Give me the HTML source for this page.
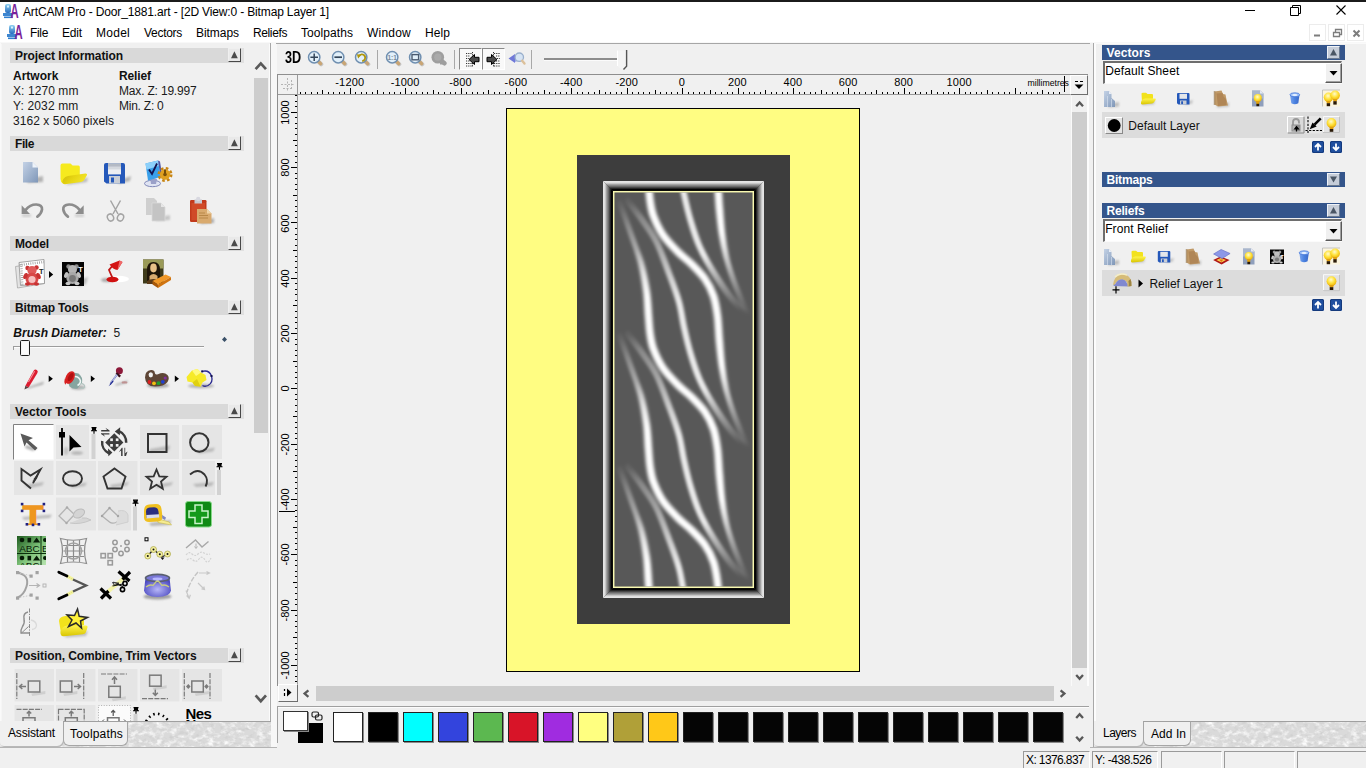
<!DOCTYPE html>
<html lang="en"><head><meta charset="utf-8"><title>ArtCAM Pro - Door_1881.art</title>
<style>
html,body{margin:0;padding:0;}
body{width:1366px;height:768px;overflow:hidden;background:#f0f0f0;position:relative;font-family:"Liberation Sans",sans-serif;font-size:12px;color:#000;}
.a{position:absolute;}
.t{position:absolute;white-space:nowrap;line-height:1;}
svg{position:absolute;overflow:visible;}

</style></head>
<body>
<!-- title bar + menu -->
<div class="a" style="left:0px;top:0px;width:1366px;height:2px;background:#1b1b1b;"></div>
<div class="a" style="left:0px;top:2px;width:1366px;height:40px;background:#fff;"></div>
<div class="a" style="left:0px;top:42px;width:1366px;height:1px;background:#f8f8f8;"></div>
<div class="t" style="left:23px;top:6.14px;font-size:12px;letter-spacing:-0.150px;">ArtCAM Pro - Door_1881.art - [2D View:0 - Bitmap Layer 1]</div>
<div class="t" style="left:30px;top:27.14px;font-size:12px;letter-spacing:-0.334px;">File</div>
<div class="t" style="left:62px;top:27.14px;font-size:12px;letter-spacing:-0.169px;">Edit</div>
<div class="t" style="left:96px;top:27.14px;font-size:12px;letter-spacing:0.263px;">Model</div>
<div class="t" style="left:144px;top:27.14px;font-size:12px;letter-spacing:-0.289px;">Vectors</div>
<div class="t" style="left:196px;top:27.14px;font-size:12px;letter-spacing:-0.050px;">Bitmaps</div>
<div class="t" style="left:253px;top:27.14px;font-size:12px;letter-spacing:-0.383px;">Reliefs</div>
<div class="t" style="left:301px;top:27.14px;font-size:12px;letter-spacing:0.070px;">Toolpaths</div>
<div class="t" style="left:367px;top:27.14px;font-size:12px;letter-spacing:0.220px;">Window</div>
<div class="t" style="left:425px;top:27.14px;font-size:12px;letter-spacing:0.080px;">Help</div>
<svg style="left:2px;top:3px;" width="16" height="16" viewBox="0 0 16 16"><defs><linearGradient id="ag2" x1="0" y1="0" x2="0" y2="1"><stop offset="0" stop-color="#8fd0f0"/><stop offset="1" stop-color="#2a6fc0"/></linearGradient></defs><rect x="3" y="1" width="6" height="9" rx="2" fill="url(#ag2)"/><rect x="1" y="10" width="9" height="3" fill="#3d86d0"/><rect x="2" y="13.5" width="9" height="1.6" fill="#2f7fd0"/><rect x="5" y="2.5" width="2" height="2" fill="#d8f2ff"/><text transform="translate(8.6 15.2) scale(0.58 1)" font-family="Liberation Sans, sans-serif" font-weight="bold" font-size="19.5" fill="#7a1f9a">A</text></svg>
<svg style="left:6px;top:24px;" width="16" height="16" viewBox="0 0 16 16"><defs><linearGradient id="ag6" x1="0" y1="0" x2="0" y2="1"><stop offset="0" stop-color="#8fd0f0"/><stop offset="1" stop-color="#2a6fc0"/></linearGradient></defs><rect x="3" y="1" width="6" height="9" rx="2" fill="url(#ag6)"/><rect x="1" y="10" width="9" height="3" fill="#3d86d0"/><rect x="2" y="13.5" width="9" height="1.6" fill="#2f7fd0"/><rect x="5" y="2.5" width="2" height="2" fill="#d8f2ff"/><text transform="translate(8.6 15.2) scale(0.58 1)" font-family="Liberation Sans, sans-serif" font-weight="bold" font-size="19.5" fill="#7a1f9a">A</text></svg>
<svg style="left:1240px;top:2px;" width="126" height="20" viewBox="0 0 126 20"><path d="M5 8.5H15" stroke="#000" stroke-width="1" fill="none"/><path d="M50.5 5.5H58.5V13.5H50.5Z M52.5 5.5V3.5H60.5V11.5H58.5" stroke="#000" stroke-width="1" fill="none"/><path d="M96.5 3.5L105.5 12.5M105.5 3.5L96.5 12.5" stroke="#000" stroke-width="1.1" fill="none"/></svg>
<div class="a" style="left:1309px;top:24px;width:17px;height:17px;background:#fff;border:1px solid #ececec;box-sizing:border-box;"></div>
<div class="a" style="left:1328px;top:24px;width:17px;height:17px;background:#fff;border:1px solid #ececec;box-sizing:border-box;"></div>
<div class="a" style="left:1347px;top:24px;width:17px;height:17px;background:#fff;border:1px solid #ececec;box-sizing:border-box;"></div>
<svg style="left:1309px;top:24px;" width="57" height="17" viewBox="0 0 57 17"><path d="M5 11.5H11" stroke="#7d7d7d" stroke-width="2" fill="none"/><path d="M24.5 8.5H30.5V12.5H24.5Z M26.5 8.5V5.5H32.5V10.5H30.5" stroke="#7d7d7d" stroke-width="1.3" fill="none"/><path d="M44.5 6.5L50.5 12.5M50.5 6.5L44.5 12.5" stroke="#7d7d7d" stroke-width="2" fill="none"/></svg>
<!-- left assistant panel -->
<div class="a" style="left:0px;top:43px;width:1px;height:678px;background:#fafafa;"></div>
<div class="a" style="left:1px;top:44px;width:1px;height:677px;background:#f6f6f6;"></div>
<div class="a" style="left:269px;top:44px;width:1px;height:703px;background:#fbfbfb;"></div>
<div class="a" style="left:270px;top:43px;width:1px;height:705px;background:#a8a8a8;"></div>
<div class="a" style="left:271px;top:43px;width:6px;height:705px;background:#f7f7f7;"></div>
<div class="a" style="left:10px;top:48px;width:234px;height:15px;background:#d9d9d9;"></div>
<div class="t" style="left:15px;top:49.54px;font-size:12px;letter-spacing:-0.106px;font-weight:bold;color:#111;">Project Information</div>
<div class="a" style="left:228px;top:48px;width:13px;height:14px;background:#e9e9e9;box-sizing:border-box;border:1px solid;border-color:#efefef #484848 #484848 #efefef;"></div>
<div class="a" style="left:241px;top:48px;width:3px;height:15px;background:#e0e0e0;"></div>
<svg style="left:228px;top:48px;" width="14" height="14" viewBox="0 0 14 14"><path d="M3 10.2L6.4 3.2L9.8 10.2Z" fill="#4a4a4a"/></svg>
<div class="t" style="left:13px;top:69.64px;font-size:12px;letter-spacing:0.009px;font-weight:bold;color:#111;">Artwork</div>
<div class="t" style="left:119px;top:69.64px;font-size:12px;letter-spacing:-0.113px;font-weight:bold;color:#111;">Relief</div>
<div class="t" style="left:13px;top:84.54px;font-size:12px;letter-spacing:0.081px;color:#1a1a1a;">X: 1270 mm</div>
<div class="t" style="left:13px;top:99.54px;font-size:12px;letter-spacing:0.147px;color:#1a1a1a;">Y: 2032 mm</div>
<div class="t" style="left:13px;top:115.24px;font-size:12px;letter-spacing:0.052px;color:#1a1a1a;">3162 x 5060 pixels</div>
<div class="t" style="left:119px;top:84.54px;font-size:12px;letter-spacing:-0.181px;color:#1a1a1a;">Max. Z: 19.997</div>
<div class="t" style="left:119px;top:99.54px;font-size:12px;letter-spacing:-0.242px;color:#1a1a1a;">Min. Z: 0</div>
<div class="a" style="left:10px;top:136px;width:234px;height:15px;background:#d9d9d9;"></div>
<div class="t" style="left:15px;top:137.54px;font-size:12px;letter-spacing:-0.418px;font-weight:bold;color:#111;">File</div>
<div class="a" style="left:228px;top:136px;width:13px;height:14px;background:#e9e9e9;box-sizing:border-box;border:1px solid;border-color:#efefef #484848 #484848 #efefef;"></div>
<div class="a" style="left:241px;top:136px;width:3px;height:15px;background:#e0e0e0;"></div>
<svg style="left:228px;top:136px;" width="14" height="14" viewBox="0 0 14 14"><path d="M3 10.2L6.4 3.2L9.8 10.2Z" fill="#4a4a4a"/></svg>
<div class="a" style="left:10px;top:236px;width:234px;height:15px;background:#d9d9d9;"></div>
<div class="t" style="left:15px;top:237.54px;font-size:12px;letter-spacing:-0.133px;font-weight:bold;color:#111;">Model</div>
<div class="a" style="left:228px;top:236px;width:13px;height:14px;background:#e9e9e9;box-sizing:border-box;border:1px solid;border-color:#efefef #484848 #484848 #efefef;"></div>
<div class="a" style="left:241px;top:236px;width:3px;height:15px;background:#e0e0e0;"></div>
<svg style="left:228px;top:236px;" width="14" height="14" viewBox="0 0 14 14"><path d="M3 10.2L6.4 3.2L9.8 10.2Z" fill="#4a4a4a"/></svg>
<div class="a" style="left:10px;top:300px;width:234px;height:15px;background:#d9d9d9;"></div>
<div class="t" style="left:15px;top:301.54px;font-size:12px;letter-spacing:-0.134px;font-weight:bold;color:#111;">Bitmap Tools</div>
<div class="a" style="left:228px;top:300px;width:13px;height:14px;background:#e9e9e9;box-sizing:border-box;border:1px solid;border-color:#efefef #484848 #484848 #efefef;"></div>
<div class="a" style="left:241px;top:300px;width:3px;height:15px;background:#e0e0e0;"></div>
<svg style="left:228px;top:300px;" width="14" height="14" viewBox="0 0 14 14"><path d="M3 10.2L6.4 3.2L9.8 10.2Z" fill="#4a4a4a"/></svg>
<div class="t" style="left:13.3px;top:326.84px;font-size:12px;font-weight:bold;font-style:italic;color:#111;">Brush Diameter:</div>
<div class="t" style="left:113.5px;top:326.84px;font-size:12px;letter-spacing:-0.174px;color:#1a1a1a;">5</div>
<div class="a" style="left:10px;top:404px;width:234px;height:15px;background:#d9d9d9;"></div>
<div class="t" style="left:15px;top:405.54px;font-size:12px;letter-spacing:0.031px;font-weight:bold;color:#111;">Vector Tools</div>
<div class="a" style="left:228px;top:404px;width:13px;height:14px;background:#e9e9e9;box-sizing:border-box;border:1px solid;border-color:#efefef #484848 #484848 #efefef;"></div>
<div class="a" style="left:241px;top:404px;width:3px;height:15px;background:#e0e0e0;"></div>
<svg style="left:228px;top:404px;" width="14" height="14" viewBox="0 0 14 14"><path d="M3 10.2L6.4 3.2L9.8 10.2Z" fill="#4a4a4a"/></svg>
<div class="a" style="left:10px;top:648px;width:234px;height:15px;background:#d9d9d9;"></div>
<div class="t" style="left:15px;top:649.54px;font-size:12px;letter-spacing:-0.082px;font-weight:bold;color:#111;">Position, Combine, Trim Vectors</div>
<div class="a" style="left:228px;top:648px;width:13px;height:14px;background:#e9e9e9;box-sizing:border-box;border:1px solid;border-color:#efefef #484848 #484848 #efefef;"></div>
<div class="a" style="left:241px;top:648px;width:3px;height:15px;background:#e0e0e0;"></div>
<svg style="left:228px;top:648px;" width="14" height="14" viewBox="0 0 14 14"><path d="M3 10.2L6.4 3.2L9.8 10.2Z" fill="#4a4a4a"/></svg>
<div class="a" style="left:253px;top:44px;width:16px;height:677px;background:#f0f0f0;"></div>
<div class="a" style="left:254px;top:78px;width:14px;height:355px;background:#cdcdcd;"></div>
<svg style="left:253px;top:58px;" width="16" height="14" viewBox="0 0 16 14"><path d="M2.6 11.2L7.8 5.4L13 11.2" stroke="#595959" stroke-width="2.7" fill="none"/></svg>
<svg style="left:253px;top:692px;" width="16" height="14" viewBox="0 0 16 14"><path d="M2.6 3.4L7.8 9.2L13 3.4" stroke="#595959" stroke-width="2.7" fill="none"/></svg>
<svg style="left:0;top:721px" width="271" height="26"><defs><filter id="nz" x="0" y="0" width="100%" height="100%"><feTurbulence type="fractalNoise" baseFrequency="0.14 0.2" numOctaves="3" seed="7"/><feColorMatrix type="matrix" values="0 0 0 0 0.96  0 0 0 0 0.96  0 0 0 0 0.96  3.0 0 0 0 -1.4"/><feComposite in2="SourceGraphic" operator="in"/></filter><filter id="nz2" x="0" y="0" width="100%" height="100%"><feTurbulence type="fractalNoise" baseFrequency="0.2 0.28" numOctaves="2" seed="11"/><feColorMatrix type="matrix" values="0 0 0 0 0.6  0 0 0 0 0.6  0 0 0 0 0.6  2.4 0 0 0 -1.25"/><feComposite in2="SourceGraphic" operator="in"/></filter></defs><rect x="0" y="0" width="271" height="26" fill="#dadada"/><rect x="0" y="0" width="271" height="26" fill="#fff" filter="url(#nz)"/><rect x="0" y="0" width="271" height="26" fill="#fff" filter="url(#nz2)"/></svg>
<div class="a" style="left:63px;top:721px;width:208px;height:1px;background:#a0a0a0;"></div>
<div class="a" style="left:0;top:721px;width:63px;height:25px;background:#f0f0f0;border-radius:0 0 6px 4px;box-shadow:1px 1px 0 #b8b8b8;"></div>
<div class="a" style="left:63px;top:721px;width:65px;height:25px;background:#f0f0f0;border:1px solid #a6a6a6;border-top-color:#a0a0a0;border-radius:0 0 6px 6px;box-sizing:border-box;"></div>
<div class="t" style="left:8px;top:727.04px;font-size:12px;letter-spacing:-0.187px;">Assistant</div>
<div class="t" style="left:70px;top:728.04px;font-size:12px;letter-spacing:0.181px;">Toolpaths</div>
<div class="a" style="left:0px;top:747px;width:277px;height:1px;background:#b4b4b4;"></div>
<!-- left panel icons -->
<svg style="left:0;top:0" width="271" height="721" viewBox="0 0 271 721"><defs><linearGradient id="docg" x1="0" y1="0" x2="1" y2="1"><stop offset="0" stop-color="#c4d2e6"/><stop offset="1" stop-color="#7f97b8"/></linearGradient><linearGradient id="fold" x1="0" y1="0" x2="0" y2="1"><stop offset="0" stop-color="#fff44a"/><stop offset="1" stop-color="#d8c400"/></linearGradient><linearGradient id="fold2" x1="0" y1="0" x2="1" y2="0.4"><stop offset="0" stop-color="#cdb90a"/><stop offset="0.5" stop-color="#e6d412"/><stop offset="1" stop-color="#f2e42a"/></linearGradient><linearGradient id="abcg" x1="0" y1="0" x2="1" y2="1"><stop offset="0" stop-color="#1e5a1e"/><stop offset="0.55" stop-color="#7fc47a"/><stop offset="1" stop-color="#b8e4b0"/></linearGradient><radialGradient id="cupg" cx="0.5" cy="0.6" r="0.6"><stop offset="0" stop-color="#b8b8f8"/><stop offset="1" stop-color="#4a48c0"/></radialGradient><filter id="sh" x="-30%" y="-30%" width="160%" height="160%"><feGaussianBlur stdDeviation="0.9"/></filter></defs><g transform="translate(23 162)"><path d="M6 17L20 14L20 20L4 21Z" fill="#9a9a9a" opacity="0.7" filter="url(#sh)"/><path d="M0 0H9.5L15 5.5V20.5H0Z" fill="url(#docg)"/><path d="M9.5 0V5.5H15Z" fill="#eef3fa"/></g><g transform="translate(60 163)"><path d="M8 20L28 14.5L27 19L6 22Z" fill="#9a9a9a" opacity="0.6" filter="url(#sh)"/><path d="M0.5 2.5Q0.5 0.4 2.5 0.4H10.5L12.6 2.5H18.5Q19.8 2.5 19.8 4V13L3 20.5Q0.5 19 0.5 16Z" fill="#f6ea1e"/><path d="M3 20.6Q1.4 19 3.4 16Q5 13.4 8 13L25.4 10.4Q27.6 10.3 27 12L24.2 17Q23.2 18.6 21 18.9L5 21.3Q3.6 21.4 3 20.6Z" fill="url(#fold2)"/></g><g transform="translate(104 163)"><path d="M16 17L27 13L26 18L14 21Z" fill="#9a9a9a" opacity="0.7" filter="url(#sh)"/><path d="M0 2Q0 0 2 0H19Q21 0 21 2V20.5H2.5L0 18.5Z" fill="#2458ba"/><rect x="4" y="0.4" width="13" height="11" fill="#eceef2"/><rect x="4" y="0.4" width="13" height="3.4" fill="#b4bac4"/><rect x="4" y="3.8" width="13" height="2.6" fill="#d4d8de"/><rect x="5" y="13" width="11" height="7.5" fill="#c9ced6"/><rect x="7" y="14.5" width="3" height="5" fill="#2458ba"/></g><g transform="translate(144 160)"><ellipse cx="8.5" cy="23.5" rx="8" ry="3.2" fill="#dfe3f2" stroke="#8088b8" stroke-width="1"/><path d="M6 17L13 19L12 24H7Z" fill="#9aa0c8"/><path d="M1.5 3.5L14 0.5L16.5 17L4 20.5Z" fill="#3aa0ea"/><path d="M1.5 3.5L14 0.5L14.8 6L2.5 9.5Z" fill="#8cd0fa"/><path d="M14 0.5L16 1.5L18.5 17.5L16.5 17Z" fill="#5058a8"/><path d="M5 9.5L8 14L13 3.5" stroke="#141450" stroke-width="1.8" fill="none"/><circle cx="21" cy="14.5" r="5.2" fill="#e0a020"/><circle cx="21" cy="14.5" r="6.3" fill="none" stroke="#c88410" stroke-width="2.4" stroke-dasharray="2.6 2.35"/><circle cx="21" cy="14.5" r="1.8" fill="#7a5008"/><path d="M21 9.5V13" stroke="#5a3a08" stroke-width="1.6"/></g><g transform="translate(21 202)"><path d="M1 12.4H10V14.8H1Z" fill="#c4c4c4" opacity="0.9" filter="url(#sh)"/><path d="M4.7 7.8Q9 2.4 15.3 2.5Q21.6 3 21 7.6Q20.4 11.6 16.4 14.6" stroke="#8c8c8c" stroke-width="2.7" fill="none" stroke-linecap="round"/><path d="M0.6 3.2V11.9H9Z" fill="#8c8c8c"/></g><g transform="translate(62 202)"><path d="M13 12.4H22V14.8H13Z" fill="#c4c4c4" opacity="0.9" filter="url(#sh)"/><path d="M17.6 7.8Q13.3 2.4 7 2.5Q0.7 3 1.3 7.6Q1.9 11.6 5.9 14.6" stroke="#8c8c8c" stroke-width="2.7" fill="none" stroke-linecap="round"/><path d="M21.7 3.2V11.9H13.3Z" fill="#8c8c8c"/></g><g transform="translate(106 200)"><path d="M4.5 0.5L12 14M14.5 0.5L7 14" stroke="#a4a4a4" stroke-width="1.5" fill="none"/><ellipse cx="4.5" cy="17.5" rx="3" ry="3.6" transform="rotate(-25 4.5 17.5)" fill="none" stroke="#a4a4a4" stroke-width="1.5"/><ellipse cx="14.5" cy="17.5" rx="3" ry="3.6" transform="rotate(25 14.5 17.5)" fill="none" stroke="#a4a4a4" stroke-width="1.5"/></g><g transform="translate(146 198)"><path d="M10 20L24 17V22L10 23Z" fill="#bcbcbc" opacity="0.8" filter="url(#sh)"/><path d="M0 0H8L11 3V17H0Z" fill="#cfcfcf"/><path d="M6 5H15L19 9V23H6Z" fill="#c4c4c4" stroke="#dadada" stroke-width="0.8"/><path d="M15 5V9H19Z" fill="#e6e6e6"/></g><g transform="translate(190 196)"><path d="M12 25L24 22V27L10 28Z" fill="#a0a0a0" opacity="0.8" filter="url(#sh)"/><rect x="0" y="4" width="16.5" height="22" rx="1.2" fill="#c23a1c"/><rect x="1.5" y="7" width="13.5" height="17" fill="#d04a28"/><path d="M4.5 3.5H12V7.5H4.5Z" fill="#c8c8d0"/><circle cx="8.2" cy="3" r="2.2" fill="#d8d8e0"/><path d="M7 13H17L21.5 17.5V27.5H7Z" fill="#d9aa6e"/><path d="M17 13V17.5H21.5Z" fill="#f0d4a8"/><path d="M9 17H15M9 19.5H18M9 22H18" stroke="#b88848" stroke-width="1"/></g><g transform="translate(15 259)"><path d="M0.5 7.5L27 3.5L29.5 24.5L2.5 29Z" fill="#e4e4e4" stroke="#a8a8a8" stroke-width="0.8"/><path d="M4 3.5L29 0.5L29.5 24.5L5.5 26.5Z" fill="#fff" stroke="#9a9a9a" stroke-width="0.9"/><path d="M4.5 6L29 3" stroke="#9a9a9a" stroke-width="2.4" stroke-dasharray="0.8 1.4"/><path d="M6.2 5L7.4 26" stroke="#9a9a9a" stroke-width="2.4" stroke-dasharray="0.8 1.4"/><circle cx="12.5" cy="9" r="2.2" fill="#c83232"/><circle cx="21.5" cy="8.5" r="2.2" fill="#c83232"/><circle cx="17" cy="11.5" r="4.6" fill="#e05a5a"/><ellipse cx="17" cy="20" rx="6.5" ry="6.2" fill="#d84848"/><ellipse cx="17" cy="20.5" rx="3.6" ry="3.6" fill="#f6c0c0"/><ellipse cx="10.5" cy="17" rx="2" ry="3.2" fill="#c83232" transform="rotate(25 10.5 17)"/><ellipse cx="23.5" cy="17" rx="2" ry="3.2" fill="#c83232" transform="rotate(-25 23.5 17)"/><ellipse cx="12.5" cy="25" rx="2.6" ry="1.8" fill="#c83232"/><ellipse cx="21.5" cy="25" rx="2.6" ry="1.8" fill="#c83232"/><text x="24" y="15" font-family="Liberation Sans, sans-serif" font-weight="bold" font-size="7.5" fill="#222">T</text></g><g transform="translate(49 271)"><path d="M0 0L4.2 3.5L0 7Z" fill="#000"/></g><g transform="translate(62 262)"><path d="M18 18L26 15L24 22L16 25Z" fill="#a8a8a8" opacity="0.7" filter="url(#sh)"/><rect x="0" y="0" width="22" height="24" fill="#050505"/><circle cx="6.5" cy="4.5" r="2.2" fill="#8c8c8c"/><circle cx="14.5" cy="4.5" r="2.2" fill="#8c8c8c"/><circle cx="10.5" cy="7.5" r="4.5" fill="#b4b4b4"/><ellipse cx="10.5" cy="16" rx="6.2" ry="6" fill="#a8a8a8"/><ellipse cx="10.5" cy="16.5" rx="3.4" ry="3.4" fill="#787878"/><ellipse cx="4.2" cy="13" rx="1.9" ry="3" fill="#c0c0c0" transform="rotate(25 4.2 13)"/><ellipse cx="16.8" cy="13" rx="1.9" ry="3" fill="#c0c0c0" transform="rotate(-25 16.8 13)"/><ellipse cx="6" cy="21.5" rx="2.5" ry="1.7" fill="#c8c8c8"/><ellipse cx="15" cy="21.5" rx="2.5" ry="1.7" fill="#c8c8c8"/><text x="16.2" y="10.4" font-family="Liberation Sans, sans-serif" font-weight="bold" font-size="7.5" fill="#fff">T</text></g><g transform="translate(101 260)"><ellipse cx="18" cy="19" rx="10" ry="3.2" fill="#fff" opacity="0.95"/><ellipse cx="6" cy="20" rx="6" ry="2" fill="#8a8a8a" opacity="0.7" filter="url(#sh)"/><ellipse cx="11.5" cy="19.5" rx="6" ry="2.8" fill="#d01010"/><path d="M11.5 18L8 10L13 4" stroke="#c01818" stroke-width="1.8" fill="none"/><path d="M8.5 4.5L18.5 0.5L21.5 2L16.5 10Q12 9.5 8.5 4.5Z" fill="#d41414"/><path d="M18.5 0.5L21.5 2L16.5 10Z" fill="#f06a6a"/></g><g transform="translate(143 259)"><rect x="0" y="0.5" width="20.5" height="24" fill="#3e3a1a"/><rect x="0" y="0.5" width="20.5" height="9" fill="#9a9a58"/><path d="M4 25V11Q4 3 10.5 3Q17 3 17 11V25Z" fill="#1e1408"/><ellipse cx="10.5" cy="9" rx="3.3" ry="4.4" fill="#e8c088"/><path d="M6.5 17Q10.5 13 14.5 17V21H6.5Z" fill="#d8aa70"/><path d="M4 22Q10 18 17 22V25H4Z" fill="#5a3a18"/><path d="M9.5 22L22.5 15.5L28 18L15 25.5Z" fill="#f09828"/><path d="M9.5 22L15 25.5V29L9.5 25.5Z" fill="#a85808"/><path d="M15 25.5L28 18V21L15 29Z" fill="#d07410"/></g><rect x="13" y="346" width="191" height="1" fill="#9c9c9c"/><rect x="13" y="347" width="191" height="1" fill="#fdfdfd"/><rect x="13" y="346" width="1" height="4" fill="#9c9c9c"/><rect x="20.5" y="340.5" width="9" height="15" rx="1" fill="#f4f4f4" stroke="#1c1c1c" stroke-width="1"/><rect x="22" y="342" width="6" height="12" fill="#fbfbfb"/><path d="M224.5 336.8L227 339.4L224.5 342L222 339.4Z" fill="#3a5068"/><g transform="translate(24 369)"><path d="M3 18.5L20 12.5L19 15.5L4 19.8Z" fill="#a0a0a0" opacity="0.8" filter="url(#sh)"/><path d="M1.4 16.8L9.8 1.6Q11 0 12.8 1Q14.4 2.2 13.4 4L4.6 18.4Z" fill="#dc1c30"/><path d="M4.4 13L10.6 2.2" stroke="#f4909a" stroke-width="1.1"/><path d="M1.4 16.8L4.6 18.4L0.4 20.6Z" fill="#584040"/></g><g transform="translate(48.7 375.4)"><path d="M0 0L4.2 3.3L0 6.6Z" fill="#000"/></g><g transform="translate(90.8 375.4)"><path d="M0 0L4.2 3.3L0 6.6Z" fill="#000"/></g><g transform="translate(174.8 375.4)"><path d="M0 0L4.2 3.3L0 6.6Z" fill="#000"/></g><g transform="translate(64 371)"><ellipse cx="14" cy="16.5" rx="7.5" ry="2.2" fill="#909090" opacity="0.7" filter="url(#sh)"/><path d="M6.5 1L14.5 2.5Q19 6 18 11.5L13.5 17.5Q9 18.5 5.5 15.5L3 8Z" fill="#86a5a0"/><path d="M10 5.5Q15 5 16.5 10Q16.5 13 13.5 14.5" stroke="#eef6f4" stroke-width="1.5" fill="none"/><path d="M17 12.5Q21 13 20.5 16Q19 18 15.5 17" stroke="#b4c4c0" stroke-width="1.3" fill="none"/><ellipse cx="6" cy="6.5" rx="4.2" ry="6.8" transform="rotate(28 6 6.5)" fill="#d82020"/><ellipse cx="6.6" cy="6" rx="2.2" ry="4.4" transform="rotate(28 6.6 6)" fill="#b01010"/><path d="M0.8 7.5Q-0.4 11.5 1.2 13.8Q2.6 12 3 9Z" fill="#d82020"/></g><g transform="translate(107 367)"><path d="M9 17L21 13.2L20 16L8 19Z" fill="#a8a8a8" opacity="0.8" filter="url(#sh)"/><circle cx="12.4" cy="3.8" r="3.5" fill="#8c1838"/><path d="M9.2 6.2L13.2 9.6" stroke="#38101c" stroke-width="2.4"/><path d="M10.4 8.2L4.6 15.6L3.2 16.6L3.8 15L9.4 7.6Z" fill="#eceffd" stroke="#8088c8" stroke-width="0.9"/><path d="M5.6 13.6L3.4 16.4L1.6 19.2L4.2 17.2L6.6 14.4Z" fill="#1c2890"/><ellipse cx="17.5" cy="15.4" rx="3" ry="1.2" fill="#b87878" opacity="0.7"/></g><g transform="translate(144 369)"><ellipse cx="14" cy="16.5" rx="11" ry="2.6" fill="#8a8a8a" opacity="0.7" filter="url(#sh)"/><path d="M1 8.5Q1 1.5 7 1Q10.5 0.8 10.8 3.8Q11 6.5 14 5.2Q20 2.5 23.5 6Q26 9 23.5 13Q20 17.5 11 17.5Q1.5 17.5 1 8.5Z" fill="#5e4636"/><ellipse cx="6.8" cy="5.8" rx="2.2" ry="2.6" fill="#f0f0f0"/><circle cx="5.5" cy="13" r="1.9" fill="#e02020"/><circle cx="10" cy="14.3" r="1.9" fill="#f0c010"/><circle cx="14.5" cy="14.2" r="1.9" fill="#20a030"/><circle cx="18.8" cy="12.8" r="1.9" fill="#2040d0"/><circle cx="21.2" cy="9" r="1.6" fill="#8030a0"/></g><g transform="translate(185 368)"><ellipse cx="16" cy="18" rx="13" ry="2.2" fill="#9a9a9a" opacity="0.7" filter="url(#sh)"/><path d="M17 3.5Q24 1.5 26.5 8Q28.5 14.5 23 17.5Q20 19 17.5 17.5" stroke="#2a2a90" stroke-width="1.3" fill="none"/><path d="M1.5 9L7 2.5L12.5 1L16 4.5L20.5 7L21.5 12L17.5 14.5L15.5 18.5L10 18L7.5 14.5L2.5 13.5Z" fill="#f6ea28"/><path d="M7 2.5L12.5 1L16 4.5L11 8Z" fill="#fffa80"/><path d="M10 18L7.5 14.5L12 11L15.5 18.5Z" fill="#e0d010"/><rect x="16.2" y="2.4" width="2" height="2" fill="#101050"/><rect x="25.5" y="7" width="2" height="2" fill="#101050"/></g></svg>
<!-- vector tool icons -->
<svg style="left:0;top:0;overflow:hidden" width="271" height="721" viewBox="0 0 271 721"><rect x="13.5" y="424.5" width="40" height="35" fill="#fff"/><path d="M13.5 459.5V424.5H53.5" stroke="#808080" stroke-width="1" fill="none"/><path d="M53.5 425V459.5H14" stroke="#f8f8f8" stroke-width="1" fill="none"/><rect x="56" y="425" width="33" height="34" fill="#e5e5e5"/><rect x="140" y="425" width="39" height="34" fill="#e5e5e5"/><rect x="182" y="425" width="40" height="34" fill="#e5e5e5"/><rect x="91.5" y="434" width="4" height="25" fill="#d2d2d2"/><g transform="translate(91 427)"><path d="M0.5 0.6H5.5M1.5 1V3.2M4.5 1V3.2M0 3.8H6M3 4V6.8" stroke="#000" stroke-width="1.1" fill="none"/><rect x="1.5" y="1" width="3" height="2.5" fill="#000"/></g><g transform="translate(20 433)"><path d="M6 12L17 15L13 18L5 15Z" fill="#a0a0a0" opacity="0.8" filter="url(#sh)"/><path d="M0.5 0.5L13 5L8.5 7.2L17.5 15L15 17.5L6.5 9.5L4.5 13.5Z" fill="#5a5a5a"/></g><g transform="translate(58 427)"><ellipse cx="19" cy="26" rx="6" ry="1.8" fill="#a8a8a8" opacity="0.8" filter="url(#sh)"/><ellipse cx="8" cy="24" rx="2.5" ry="4" fill="#b0b0b0" opacity="0.6" filter="url(#sh)"/><path d="M4 1V28.5" stroke="#000" stroke-width="1.8"/><rect x="1" y="5" width="6" height="5.5" fill="#000"/><path d="M11.5 8L11.5 24.5L15.5 20.5L23.5 20Z" fill="#000"/></g><g transform="translate(99 427)"><g fill="none" stroke="#3c3c3c" stroke-width="2.5"><path d="M20 4.2A12 12 0 0 1 27.2 15.8"/><path d="M3.2 14A12 12 0 0 0 10 26.3"/></g><g fill="#3c3c3c"><path d="M15.8 4.4L21.2 0.3L20.8 8.2Z"/><path d="M13.4 25.6L9 21.4L9.4 29.2Z"/><path d="M15.3 6.2L24.4 15.5L15.3 24.6L6.2 15.5Z"/><path d="M2.2 2.9H8L6.4 0.8L10.6 3.6V4.4H2.2Z"/><path d="M10.4 6H4.6L6.2 8.2L2 5.4V4.6H10.4Z" transform="translate(0 1.6)"/><path d="M22.1 29V23.6L19.8 25.2L22.8 20.8H23.6V29Z"/><path d="M25.4 20.8V26.2L27.7 24.6L26.2 29H24.6V20.8Z" transform="translate(0.8 0)"/></g><g fill="#f0f0f0"><rect x="11.2" y="11.4" width="2.7" height="2.7"/><rect x="16.8" y="11.4" width="2.7" height="2.7"/><rect x="11.2" y="17" width="2.7" height="2.7"/><rect x="16.8" y="17" width="2.7" height="2.7"/></g></g><g transform="translate(147 433)"><path d="M3 16L23 12.5L22 17.5L2 19.5Z" fill="#a8a8a8" opacity="0.7" filter="url(#sh)"/><rect x="1" y="1" width="18.5" height="18" fill="none" stroke="#333" stroke-width="2"/></g><g transform="translate(189 432)"><path d="M8 19L26 15.5L24 19.5L10 21.5Z" fill="#a8a8a8" opacity="0.7" filter="url(#sh)"/><circle cx="10.3" cy="10.5" r="9.2" fill="none" stroke="#333" stroke-width="2"/></g><rect x="14" y="461" width="39.5" height="34" fill="#e5e5e5"/><rect x="56" y="461" width="40" height="34" fill="#e5e5e5"/><rect x="98" y="461" width="39.5" height="34" fill="#e5e5e5"/><rect x="140" y="461" width="39" height="34" fill="#e5e5e5"/><rect x="182" y="461" width="33" height="34" fill="#e5e5e5"/><rect x="217.0" y="470" width="4" height="25" fill="#d2d2d2"/><g transform="translate(216.5 463)"><path d="M0.5 0.6H5.5M1.5 1V3.2M4.5 1V3.2M0 3.8H6M3 4V6.8" stroke="#000" stroke-width="1.1" fill="none"/><rect x="1.5" y="1" width="3" height="2.5" fill="#000"/></g><g transform="translate(20 467)"><path d="M4 18L24 15L22 18.5L10 21Z" fill="#a8a8a8" opacity="0.7" filter="url(#sh)"/><path d="M11 21.5L1.5 13.5V2L10.5 8.5L20.5 2.5L13 16" stroke="#333" stroke-width="1.9" fill="none" stroke-linejoin="miter"/><path d="M20.5 2.5L12 14.5L14.5 10.5L12.5 17.5L17 11.5Z" fill="#333"/></g><g transform="translate(62 470)"><path d="M8 15L25 12.5L23 16L10 18Z" fill="#a8a8a8" opacity="0.7" filter="url(#sh)"/><ellipse cx="10.5" cy="8.5" rx="9.5" ry="7.3" fill="none" stroke="#333" stroke-width="1.9"/></g><g transform="translate(102 467)"><path d="M8 18L27 15L25 18.5L10 21Z" fill="#a8a8a8" opacity="0.7" filter="url(#sh)"/><path d="M12.5 1.5L23.5 9.5L19.5 21.5H5.5L1.5 9.5Z" fill="none" stroke="#333" stroke-width="1.9"/></g><g transform="translate(145 468)"><path d="M10 17L28 14L26 17.5L12 20Z" fill="#a8a8a8" opacity="0.7" filter="url(#sh)"/><path d="M11.5 1.5L14.3 8.3L21.5 8.8L16 13.5L17.8 20.8L11.5 16.8L5.2 20.8L7 13.5L1.5 8.8L8.7 8.3Z" fill="none" stroke="#333" stroke-width="1.8" stroke-linejoin="miter"/></g><g transform="translate(188 469)"><path d="M5 15L26 13L24 17L8 18Z" fill="#a8a8a8" opacity="0.7" filter="url(#sh)"/><path d="M2 5.5Q10 -1.5 16.5 5.5Q21 11 17.5 17.5" fill="none" stroke="#333" stroke-width="1.9"/></g><rect x="56" y="497.5" width="40" height="33" fill="#e5e5e5"/><rect x="98" y="497.5" width="33" height="33" fill="#e5e5e5"/><rect x="133.0" y="506.5" width="4" height="24" fill="#d2d2d2"/><g transform="translate(132.5 499.5)"><path d="M0.5 0.6H5.5M1.5 1V3.2M4.5 1V3.2M0 3.8H6M3 4V6.8" stroke="#000" stroke-width="1.1" fill="none"/><rect x="1.5" y="1" width="3" height="2.5" fill="#000"/></g><g transform="translate(20 502)"><path d="M2 15L32 12.5L30 16L4 18Z" fill="#a8a8a8" opacity="0.7" filter="url(#sh)"/><text transform="translate(3 21.6) scale(1.24 1)" font-family="Liberation Sans, sans-serif" font-weight="bold" font-size="26.5" fill="#ee9620" stroke="#ee9620" stroke-width="1.5" stroke-linejoin="miter">T</text><path d="M7.5 22.3H18.5" stroke="#ee9620" stroke-width="1.6"/><g fill="#202080"><rect x="0.8" y="0.8" width="2.6" height="2.6"/><rect x="22.6" y="0.8" width="2.6" height="2.6"/><rect x="0.8" y="7.6" width="2.6" height="2.6"/><rect x="22.6" y="7.6" width="2.6" height="2.6"/><rect x="5.6" y="21" width="2.6" height="2.6"/><rect x="17.6" y="21" width="2.6" height="2.6"/><rect x="11.7" y="21.6" width="2.6" height="2.6"/></g></g><g transform="translate(58 503)"><path d="M1 13L9 4.5L16.5 11.5L8.5 20Z" fill="none" stroke="#b4b4b4" stroke-width="1.3"/><ellipse cx="21" cy="10.5" rx="6" ry="4" fill="#d4d4d4" stroke="#bcbcbc" stroke-width="1" transform="rotate(-30 21 10.5)"/><path d="M12 20Q22 22 33 17Q28 14 24 15" fill="#d6d6d6" stroke="#c0c0c0" stroke-width="0.8"/><circle cx="9" cy="4.5" r="1.2" fill="#aaa"/><circle cx="8.5" cy="20" r="1.2" fill="#aaa"/></g><g transform="translate(100 503)"><path d="M2 13L9.5 5L18 13Q20 17 16 19.5Q12 21 9.5 19Z" fill="none" stroke="#b0b0b0" stroke-width="1.3"/><path d="M18 8Q26 6 28 12V19L16 22" fill="#dcdcdc" stroke="#cacaca" stroke-width="0.8"/><circle cx="9.5" cy="5" r="1.2" fill="#a4a4a4"/><circle cx="18" cy="13" r="1.2" fill="#a4a4a4"/><circle cx="2" cy="13" r="1.2" fill="#a4a4a4"/></g><g transform="translate(143 503)"><path d="M6 20L28 17L27 22L8 23Z" fill="#a0a0a0" opacity="0.7" filter="url(#sh)"/><path d="M14 15.5L26 19L28.5 22L15 19.5Z" fill="#f6ec90" stroke="#c8b850" stroke-width="0.6"/><path d="M1 8Q1 2 6 1.5L13 1Q18 1 18.5 6L19.5 14Q19.5 18 15 18.5L6 19Q1.5 19 1 15Z" fill="#f0c020"/><path d="M3 8.5Q3 4.5 7 4.5L11 4.2Q15 4.2 15.5 8.5L16 14L3.5 15Z" fill="#2a2e80"/><path d="M3.3 12L16 11.2L16.2 14.5L3.5 15.5Z" fill="#d8dcf0"/><path d="M19 12L23 14.5L22 17L19.3 15.5Z" fill="#8088c0"/></g><g transform="translate(185 501)"><rect x="0.5" y="0.5" width="26" height="25.5" rx="2.5" fill="#0f8a14" stroke="#86d888" stroke-width="1"/><path d="M10 4H17V10H23V16.5H17V22.5H10V16.5H4V10H10Z" fill="#149a1a" stroke="#c8f4c8" stroke-width="1.5"/></g><g transform="translate(17 536)"><clipPath id="abcc"><rect x="0" y="0" width="29" height="29"/></clipPath><g clip-path="url(#abcc)"><rect x="0" y="0" width="29" height="29" fill="url(#abcg)"/><path d="M0 17.5H29M24 0V29" stroke="#0a300a" stroke-width="1"/><g fill="#071c07"><circle cx="5" cy="4" r="2.3"/><rect x="10.5" y="1.8" width="3.6" height="4.6"/><path d="M16 6.5L19.6 1.5L23.2 6.5Z"/><circle cx="5" cy="22" r="2.3"/><rect x="10.5" y="19.8" width="3.6" height="4.6"/><path d="M16 24.5L19.6 19.5L23.2 24.5Z"/><circle cx="28" cy="4" r="2"/><circle cx="28" cy="22" r="2"/></g><text x="2.2" y="15.6" font-size="9.5" font-family="Liberation Sans, sans-serif" fill="#071c07" textLength="20.5" lengthAdjust="spacingAndGlyphs">ABC</text><text x="25" y="15.6" font-size="9.5" font-family="Liberation Sans, sans-serif" fill="#071c07">E</text><text x="2.2" y="33.4" font-size="9.5" font-family="Liberation Sans, sans-serif" fill="#071c07" textLength="20.5" lengthAdjust="spacingAndGlyphs">ABC</text></g></g><g transform="translate(59 537)"><g fill="none" stroke="#8c8c8c" stroke-width="1.2"><path d="M1.5 1.5Q14 5 27.5 1.5Q23.5 14 27.5 26.5Q14 23.5 1.5 26.5Q5.5 14 1.5 1.5Z"/><path d="M8.5 3V25M14.5 3.5V24.5M20.5 3V25M4 8.5H25M4.5 14H24.5M4 19.5H25"/><circle cx="14.5" cy="14" r="8" stroke="#a4a4a4" stroke-width="1.6"/></g></g><g transform="translate(100 539)"><g fill="none" stroke="#9a9a9a" stroke-width="1.5"><circle cx="15" cy="3.5" r="2.2"/><circle cx="27" cy="3.5" r="2.2"/><circle cx="15" cy="10.5" r="2.2"/><circle cx="27" cy="10.5" r="2.2"/><circle cx="21" cy="14.5" r="2.2"/><rect x="1" y="14.5" width="4.4" height="4.4"/><rect x="8" y="14.5" width="4.4" height="4.4"/><rect x="8" y="21.5" width="4.4" height="4.4"/></g><circle cx="21" cy="7" r="0.9" fill="#9a9a9a"/></g><g transform="translate(144 537)"><rect x="1" y="0.8" width="3" height="3" fill="#fff" stroke="#000" stroke-width="1"/><path d="M3.5 19L9.5 12.5L15.5 17.5L18 20L23.5 17" stroke="#222" stroke-width="1.4" fill="none"/><g fill="#f4f0a0" stroke="#a8a440" stroke-width="0.7"><circle cx="3.8" cy="19" r="3"/><circle cx="9.5" cy="12.5" r="3"/><circle cx="15.8" cy="17.2" r="3"/><circle cx="23.5" cy="17" r="3"/></g><g fill="#111"><circle cx="3.8" cy="19" r="1"/><circle cx="9.5" cy="12.5" r="1"/><circle cx="15.8" cy="17.2" r="1"/><circle cx="23.5" cy="17" r="1"/><path d="M16.5 20.5L18.5 23L20.5 20.5Z"/></g></g><g transform="translate(185 539)"><path d="M1 9L10.5 1L17 8L23.5 2.5" stroke="#a8a8a8" stroke-width="1.4" fill="none"/><path d="M11 4.5V9M9.5 7.5L11 9.5L12.5 7.5" stroke="#b4b4b4" stroke-width="1" fill="none"/><path d="M1 16Q4 12 7 15T13 15T19 14T25 15M2 21Q5 18 8 21T14 20T20 21T26 19" stroke="#d2d2d2" stroke-width="1.2" fill="none" stroke-dasharray="2 1.2"/></g><g transform="translate(16 571)"><path d="M1 1.5Q14 4 10.5 15.5Q8 24 1 27" stroke="#a2a2a2" stroke-width="2" fill="none"/><path d="M1 1.5L16 5M1 27L16 24" stroke="#c4c4c4" stroke-width="0.9" stroke-dasharray="1.5 1.5"/><g fill="#a2a2a2"><rect x="0" y="0" width="3.2" height="3.2"/><rect x="0" y="25.5" width="3.2" height="3.2"/><rect x="13.5" y="3.5" width="3.2" height="3.2"/><rect x="13.5" y="22.5" width="3.2" height="3.2"/><rect x="19.5" y="0" width="3.2" height="3.2"/><rect x="19.5" y="25.5" width="3.2" height="3.2"/></g><path d="M13 14.5H23M20.5 12.5L23.5 14.5L20.5 16.5" stroke="#b4b4b4" stroke-width="1.2" fill="none"/><rect x="27" y="13" width="3" height="3" fill="none" stroke="#b0b0b0" stroke-width="0.9"/></g><g transform="translate(58 571)"><path d="M9 5L15 8.5M9 24L15 20.5" stroke="#f4f4a0" stroke-width="3.6"/><path d="M9 5L15 8.5M9 24L15 20.5" stroke="#c8c860" stroke-width="0.8" stroke-dasharray="1 1.2"/><path d="M0.8 1.2L9 5M0.8 27.8L9 24" stroke="#000" stroke-width="2.8" stroke-linecap="round"/><path d="M15 8.5L28 14.5L15 20.5" stroke="#555" stroke-width="2.4" fill="none"/></g><g transform="translate(99 570)"><path d="M9 21.5L25 8" stroke="#f4f4a8" stroke-width="4"/><path d="M1.5 18.5L12 28.5M2 28.5L9.5 21" stroke="#000" stroke-width="3.2"/><path d="M19.5 1.5L30.5 11M23.5 9.5L31 2" stroke="#000" stroke-width="3.2"/><path d="M13.5 12.5L24 16.5M13.5 16L24 14" stroke="#111" stroke-width="1.2"/><path d="M14 12.2L20 13.2L14.5 14.4Z" fill="#fff" stroke="#111" stroke-width="0.8"/><circle cx="26" cy="13.5" r="2.1" fill="none" stroke="#000" stroke-width="1.6"/><circle cx="23.5" cy="19.5" r="2.1" fill="none" stroke="#000" stroke-width="1.6"/></g><g transform="translate(143 573)"><ellipse cx="14.5" cy="23.5" rx="14" ry="3" fill="#8a8a8a" opacity="0.8" filter="url(#sh)"/><path d="M2.5 5L1 17.5Q2 24 14.5 24Q27 24 28 17.5L26.5 5Z" fill="url(#cupg)"/><ellipse cx="14.5" cy="5" rx="12" ry="3.6" fill="#7a78d8" stroke="#5a6070" stroke-width="1.6"/><path d="M3 14Q7 11 10 12.5L14.5 7L19 12.5Q22 11 26 14" stroke="#c8cc80" stroke-width="1.3" fill="none"/><ellipse cx="14.5" cy="6" rx="5" ry="1.4" fill="#b8b8ff"/></g><g transform="translate(184 571)"><path d="M14 1Q6 10 3 21" stroke="#c4c4c4" stroke-width="1.4" fill="none" stroke-dasharray="5 1.5"/><path d="M15 2H25M22.5 0.5L25.5 2L22.5 3.5M14 12L20 18M17.5 17.8L20.5 18.5L19.8 15.5M2 19.5L5 27M2.6 24.5L5.2 27.4L6.4 23.8" stroke="#c8c8c8" stroke-width="1.2" fill="none"/></g><g transform="translate(20 608)"><path d="M9.5 0.5V28.5" stroke="#8a8a8a" stroke-width="1" stroke-dasharray="4 1.3 1.2 1.3"/><path d="M8 4Q3 5 4 11Q5 15 2.5 18.5Q0.5 22 1 25H9" stroke="#8e8e8e" stroke-width="1.4" fill="none"/><path d="M11 12Q16 13 16.5 17.5Q16 21 12 21.5" stroke="#dadada" stroke-width="1.3" fill="none"/><path d="M1.5 25L8.5 18.5" stroke="#8e8e8e" stroke-width="1"/></g><g transform="translate(58 608)"><path d="M6 27L30 23L28 28L8 29.5Z" fill="#a0a0a0" opacity="0.6" filter="url(#sh)"/><path d="M1 13Q1 9.5 5 8.5L12 7L26 11V17L3 25Z" fill="#f2e21c"/><path d="M3 27Q1.5 24 4 20.5Q6 17.5 10.5 17.5H28Q30 17.5 29.5 19.5L28 24Q27.5 26 25 26.2L6 28.3Q3.8 28.6 3 27Z" fill="url(#fold)"/><path d="M19.5 1L21.2 8.3L29.5 9.5L22.5 13L23.5 20L18 15L10.5 18.5L14 12L9 7L16.5 7.5Z" fill="#fff23a" stroke="#2a2a2a" stroke-width="1.5" stroke-linejoin="miter"/></g><rect x="14.5" y="669" width="39.5" height="32.5" fill="#e5e5e5"/><rect x="56" y="669" width="39.5" height="32.5" fill="#e5e5e5"/><rect x="98" y="669" width="39.5" height="32.5" fill="#e5e5e5"/><rect x="140" y="669" width="39.5" height="32.5" fill="#e5e5e5"/><rect x="182" y="669" width="40" height="32.5" fill="#e5e5e5"/><rect x="14.5" y="705" width="39.5" height="16" fill="#e5e5e5"/><rect x="56" y="705" width="39.5" height="16" fill="#e5e5e5"/><rect x="98.5" y="705.5" width="32" height="16" fill="#fbfbfb" stroke="#b0b0b0" stroke-width="1" stroke-dasharray="1 1.6"/><rect x="133.5" y="714" width="4" height="8" fill="#d2d2d2"/><g transform="translate(133 707)"><path d="M0.5 0.6H5.5M1.5 1V3.2M4.5 1V3.2M0 3.8H6M3 4V6.8" stroke="#000" stroke-width="1.1" fill="none"/><rect x="1.5" y="1" width="3" height="2.5" fill="#000"/></g><path d="M16.8 673V699" stroke="#7a7a7a" fill="none" stroke-width="1.2" stroke-dasharray="5 1.2"/><path d="M19.5 686.5H26M22.3 684L19.5 686.5L22.3 689" stroke="#7a7a7a" fill="none" stroke-width="1.5"/><path d="M31.3 693.5L45.3 691V694L32.3 696Z" fill="#c6c6c6" opacity="0.7"/><rect x="28.3" y="681" width="11.5" height="11" stroke="#7a7a7a" fill="none" stroke-width="1.5"/><path d="M83.7 673V699" stroke="#7a7a7a" fill="none" stroke-width="1.2" stroke-dasharray="5 1.2"/><path d="M74 686.5H80.5M77.7 684L80.5 686.5L77.7 689" stroke="#7a7a7a" fill="none" stroke-width="1.5"/><path d="M63.3 693.5L77.3 691V694L64.3 696Z" fill="#c6c6c6" opacity="0.7"/><rect x="60.3" y="681" width="11.5" height="11" stroke="#7a7a7a" fill="none" stroke-width="1.5"/><path d="M101 674H127" stroke="#7a7a7a" fill="none" stroke-width="1.2" stroke-dasharray="5 1.2"/><path d="M114.5 684V677M112 679.8L114.5 677L117 679.8" stroke="#7a7a7a" fill="none" stroke-width="1.5"/><path d="M111.8 698.8L125.8 696.3V699.3L112.8 701.3Z" fill="#c6c6c6" opacity="0.7"/><rect x="108.8" y="686.3" width="11.5" height="11" stroke="#7a7a7a" fill="none" stroke-width="1.5"/><path d="M142 698.6H168" stroke="#7a7a7a" fill="none" stroke-width="1.2" stroke-dasharray="5 1.2"/><path d="M155.3 688.5V695.5M152.8 692.8L155.3 695.5L157.8 692.8" stroke="#7a7a7a" fill="none" stroke-width="1.5"/><path d="M152.6 687.7L166.6 685.2V688.2L153.6 690.2Z" fill="#c6c6c6" opacity="0.7"/><rect x="149.6" y="675.2" width="11.5" height="11" stroke="#7a7a7a" fill="none" stroke-width="1.5"/><path d="M184.3 673V699M210 673V699" stroke="#7a7a7a" fill="none" stroke-width="1.2" stroke-dasharray="5 1.2"/><path d="M186 686.5L188.3 684L190.6 686.5L188.3 689ZM204.2 686.5L206.5 684L208.8 686.5L206.5 689Z" fill="#7a7a7a"/><path d="M194.8 693.5L208.8 691V694L195.8 696Z" fill="#c6c6c6" opacity="0.7"/><rect x="191.8" y="681" width="11.5" height="11" stroke="#7a7a7a" fill="none" stroke-width="1.5"/><path d="M16.5 709.3H42" stroke="#7a7a7a" fill="none" stroke-width="1.2" stroke-dasharray="5 1.2"/><path d="M29 716.5V711.5M26.8 713.5L29 711.3L31.2 713.5" stroke="#7a7a7a" fill="none" stroke-width="1.5"/><path d="M23 721V717.8H35V721" stroke="#7a7a7a" fill="none" stroke-width="1.5"/><rect x="58.5" y="709.3" width="25.7" height="14" stroke="#7a7a7a" fill="none" stroke-width="1.2" stroke-dasharray="5 1.2"/><path d="M71.3 716.5V711.5M69.1 713.5L71.3 711.3L73.5 713.5" stroke="#7a7a7a" fill="none" stroke-width="1.5"/><path d="M65.3 721V717.8H77.3V721" stroke="#7a7a7a" fill="none" stroke-width="1.5"/><path d="M113.2 716V710.5M111.2 712.5L113.2 710.3L115.2 712.5" stroke="#555" fill="none" stroke-width="1.2"/><path d="M107.5 721V717.8H119V721" stroke="#777" fill="none" stroke-width="1.5"/><path d="M104 719.5L102.5 721M124 719.5L125.5 721" stroke="#555" stroke-width="1"/><path d="M146 721.5Q156 706 169 721.5" stroke="#000" stroke-width="2.6" fill="none" stroke-dasharray="1.6 3.4"/></svg>
<div class="a" style="left:185.5px;top:705px;width:30px;height:16px;overflow:hidden;"><div class="t" style="left:0;top:0.6px;font-size:15px;font-weight:bold;letter-spacing:-0.6px;">Nes</div><div class="t" style="left:0;top:11.8px;font-size:15px;font-weight:bold;letter-spacing:-0.6px;">Nes</div></div>
<!-- 2D view: toolbar, rulers, canvas -->
<div class="a" style="left:276px;top:43px;width:814px;height:1px;background:#a6a6a6;"></div>
<div class="t" style="left:284.5px;top:49.6px;font-size:15.6px;font-weight:bold;transform:scaleX(0.81);transform-origin:0 0;">3D</div>
<svg style="left:306px;top:50px;" width="17" height="17" viewBox="0 0 17 17"><path d="M12.6 11.8L15.2 14.2" stroke="#9a9a9a" stroke-width="4.2" stroke-linecap="round" opacity="0.5"/><path d="M12.4 11.4L14.6 13.6" stroke="#c9a574" stroke-width="3.4" stroke-linecap="round"/><circle cx="8.2" cy="7.2" r="5.7" fill="#e2f0fa" stroke="#6f8fb0" stroke-width="1.5"/><path d="M4.4 7.2H12M8.2 3.4V11" stroke="#34465a" stroke-width="1.5"/></svg>
<svg style="left:330px;top:50px;" width="17" height="17" viewBox="0 0 17 17"><path d="M12.6 11.8L15.2 14.2" stroke="#9a9a9a" stroke-width="4.2" stroke-linecap="round" opacity="0.5"/><path d="M12.4 11.4L14.6 13.6" stroke="#c9a574" stroke-width="3.4" stroke-linecap="round"/><circle cx="8.2" cy="7.2" r="5.7" fill="#e2f0fa" stroke="#6f8fb0" stroke-width="1.5"/><path d="M4.4 7.2H12" stroke="#34465a" stroke-width="1.7"/></svg>
<svg style="left:353px;top:50px;" width="17" height="17" viewBox="0 0 17 17"><path d="M12.6 11.8L15.2 14.2" stroke="#9a9a9a" stroke-width="4.2" stroke-linecap="round" opacity="0.5"/><path d="M12.4 11.4L14.6 13.6" stroke="#c9a574" stroke-width="3.4" stroke-linecap="round"/><circle cx="8.2" cy="7.2" r="5.7" fill="#e2f0fa" stroke="#6f8fb0" stroke-width="1.5"/><path d="M9.2 11A3.3 3.3 0 1 0 6 6.2" stroke="#b0960c" stroke-width="1.9" fill="none"/><path d="M3.8 4.2L8.2 4.8L5.2 8.4Z" fill="#b0960c"/></svg>
<div class="a" style="left:377px;top:50px;width:1px;height:19px;background:#a8a8a8;"></div>
<svg style="left:384px;top:50px;" width="17" height="17" viewBox="0 0 17 17"><path d="M12.6 11.8L15.2 14.2" stroke="#9a9a9a" stroke-width="4.2" stroke-linecap="round" opacity="0.5"/><path d="M12.4 11.4L14.6 13.6" stroke="#c9a574" stroke-width="3.4" stroke-linecap="round"/><circle cx="8.2" cy="7.2" r="5.7" fill="#e2f0fa" stroke="#6f8fb0" stroke-width="1.5"/><text x="8.2" y="9.6" font-size="6.5" font-weight="bold" text-anchor="middle" fill="#7c8c9c" font-family="Liberation Sans, sans-serif">1:1</text></svg>
<svg style="left:407px;top:50px;" width="17" height="17" viewBox="0 0 17 17"><path d="M12.6 11.8L15.2 14.2" stroke="#9a9a9a" stroke-width="4.2" stroke-linecap="round" opacity="0.5"/><path d="M12.4 11.4L14.6 13.6" stroke="#c9a574" stroke-width="3.4" stroke-linecap="round"/><circle cx="8.2" cy="7.2" r="5.7" fill="#e2f0fa" stroke="#6f8fb0" stroke-width="1.5"/><rect x="5" y="4.6" width="6.6" height="5.2" fill="none" stroke="#4a5a70" stroke-width="1.4"/></svg>
<svg style="left:430px;top:50px;" width="18" height="17" viewBox="0 0 18 17"><circle cx="7.8" cy="7.2" r="6.3" fill="#9e9e9e"/><path d="M11 10.5L14.5 13.2" stroke="#9e9e9e" stroke-width="4.6" stroke-linecap="round"/><path d="M10 13.5H16" stroke="#9e9e9e" stroke-width="2"/><circle cx="7.8" cy="7.2" r="3.6" fill="#aaaaaa"/></svg>
<div class="a" style="left:454px;top:50px;width:1px;height:19px;background:#a8a8a8;"></div>
<div class="a" style="left:459px;top:48px;width:23px;height:22px;background:#f9f9f9;box-sizing:border-box;border:1px solid;border-color:#8a8a8a #fff #fff #8a8a8a;"></div>
<div class="a" style="left:482px;top:48px;width:23px;height:22px;background:#f9f9f9;box-sizing:border-box;border:1px solid;border-color:#8a8a8a #fff #fff #8a8a8a;"></div>
<svg style="left:462px;top:51px;" width="18" height="17" viewBox="0 0 18 17"><path d="M4 2.5H10M4 5H8M4 7.5H7M4 10H8M4 12.5H10M4 15H10M10.5 1V16" stroke="#333" stroke-width="1" stroke-dasharray="1.2 1"/><path d="M17 6.3H12.5V3.5L7 8.5L12.5 13.5V10.7H17Z" fill="#4a4a4a" stroke="#000" stroke-width="1"/></svg>
<svg style="left:485px;top:51px;" width="18" height="17" viewBox="0 0 18 17"><path d="M9 2.5H15M11 5H15M12 7.5H15M11 10H15M9 12.5H15M9 15H15M8.5 1V16" stroke="#333" stroke-width="1" stroke-dasharray="1.2 1"/><path d="M2 6.3H6.5V3.5L12 8.5L6.5 13.5V10.7H2Z" fill="#4a4a4a" stroke="#000" stroke-width="1"/></svg>
<svg style="left:507px;top:50px;" width="20" height="18" viewBox="0 0 20 18"><path d="M1.5 8.5L8 4V13Z" fill="#6f78d8"/><path d="M8 5.5L12 7V10.5L8 12Z" fill="#9aa4e8"/><circle cx="12.3" cy="7.2" r="4.2" fill="#d6e4f4" stroke="#9ab0cc" stroke-width="1.3"/><path d="M15.2 10.8L17.5 13.6" stroke="#dcc09a" stroke-width="2.4" stroke-linecap="round"/></svg>
<div class="a" style="left:531px;top:50px;width:1px;height:19px;background:#a8a8a8;"></div>
<div class="a" style="left:544px;top:58px;width:73px;height:2px;background:#8c8c8c;"></div>
<div class="a" style="left:544px;top:60px;width:73px;height:1px;background:#fbfbfb;"></div>
<svg style="left:617px;top:49px;" width="12" height="22" viewBox="0 0 12 22"><path d="M0.5 1.5H9.5V17L7 20.5H5L0.5 17Z" fill="#f4f4f4" stroke="none"/><path d="M9.6 1V17.2L6.5 20.5" stroke="#555" stroke-width="1.4" fill="none"/><path d="M0.5 1.5V17" stroke="#fff" stroke-width="1"/></svg>
<div class="a" style="left:277px;top:74px;width:811px;height:1px;background:#8e8e8e;"></div>
<div class="a" style="left:277px;top:74px;width:1px;height:612px;background:#8e8e8e;"></div>
<div class="a" style="left:278px;top:94px;width:792px;height:1px;background:#9a9a9a;"></div>
<div class="a" style="left:297px;top:75px;width:1px;height:611px;background:#9a9a9a;"></div>
<svg style="left:278px;top:75px;" width="19" height="19" viewBox="0 0 19 19"><path d="M3 9.5H17M9.5 3V16M13.5 5V14M5 13.5H15" stroke="#b4b4b4" stroke-width="1" stroke-dasharray="2 1.5"/></svg>
<svg style="left:277px;top:74px;" width="800" height="21" viewBox="0 0 800 21"><path d="M23.5 20v-2M28.5 20v-2M34.5 20v-2M40.5 20v-2M45.5 20v-4M51.5 20v-2M56.5 20v-2M62.5 20v-2M67.5 20v-2M73.5 20v-6M78.5 20v-2M84.5 20v-2M89.5 20v-2M95.5 20v-2M100.5 20v-4M106.5 20v-2M112.5 20v-2M117.5 20v-2M123.5 20v-2M128.5 20v-6M134.5 20v-2M139.5 20v-2M145.5 20v-2M150.5 20v-2M156.5 20v-4M161.5 20v-2M167.5 20v-2M173.5 20v-2M178.5 20v-2M184.5 20v-6M189.5 20v-2M195.5 20v-2M200.5 20v-2M206.5 20v-2M211.5 20v-4M217.5 20v-2M222.5 20v-2M228.5 20v-2M233.5 20v-2M239.5 20v-6M245.5 20v-2M250.5 20v-2M256.5 20v-2M261.5 20v-2M267.5 20v-4M272.5 20v-2M278.5 20v-2M283.5 20v-2M289.5 20v-2M294.5 20v-6M300.5 20v-2M305.5 20v-2M311.5 20v-2M317.5 20v-2M322.5 20v-4M328.5 20v-2M333.5 20v-2M339.5 20v-2M344.5 20v-2M350.5 20v-6M355.5 20v-2M361.5 20v-2M366.5 20v-2M372.5 20v-2M378.5 20v-4M383.5 20v-2M389.5 20v-2M394.5 20v-2M400.5 20v-2M405.5 20v-6M411.5 20v-2M416.5 20v-2M422.5 20v-2M427.5 20v-2M433.5 20v-4M438.5 20v-2M444.5 20v-2M450.5 20v-2M455.5 20v-2M461.5 20v-6M466.5 20v-2M472.5 20v-2M477.5 20v-2M483.5 20v-2M488.5 20v-4M494.5 20v-2M499.5 20v-2M505.5 20v-2M510.5 20v-2M516.5 20v-6M522.5 20v-2M527.5 20v-2M533.5 20v-2M538.5 20v-2M544.5 20v-4M549.5 20v-2M555.5 20v-2M560.5 20v-2M566.5 20v-2M571.5 20v-6M577.5 20v-2M582.5 20v-2M588.5 20v-2M594.5 20v-2M599.5 20v-4M605.5 20v-2M610.5 20v-2M616.5 20v-2M621.5 20v-2M627.5 20v-6M632.5 20v-2M638.5 20v-2M643.5 20v-2M649.5 20v-2M654.5 20v-4M660.5 20v-2M666.5 20v-2M671.5 20v-2M677.5 20v-2M682.5 20v-6M688.5 20v-2M693.5 20v-2M699.5 20v-2M704.5 20v-2M710.5 20v-4M715.5 20v-2M721.5 20v-2M727.5 20v-2M732.5 20v-2M738.5 20v-6M743.5 20v-2M749.5 20v-2M754.5 20v-2M760.5 20v-2M765.5 20v-4M771.5 20v-2M776.5 20v-2M782.5 20v-2" stroke="#000" stroke-width="1" fill="none"/></svg>
<div class="t" style="left:335.3px;top:76.89px;font-size:11px;color:#000;letter-spacing:0.15px;">-1200</div>
<div class="t" style="left:390.7px;top:76.89px;font-size:11px;color:#000;letter-spacing:0.15px;">-1000</div>
<div class="t" style="left:449.2px;top:76.89px;font-size:11px;color:#000;letter-spacing:0.15px;">-800</div>
<div class="t" style="left:504.6px;top:76.89px;font-size:11px;color:#000;letter-spacing:0.15px;">-600</div>
<div class="t" style="left:560.0px;top:76.89px;font-size:11px;color:#000;letter-spacing:0.15px;">-400</div>
<div class="t" style="left:615.4px;top:76.89px;font-size:11px;color:#000;letter-spacing:0.15px;">-200</div>
<div class="t" style="left:678.7px;top:76.89px;font-size:11px;color:#000;letter-spacing:0.15px;">0</div>
<div class="t" style="left:728.0px;top:76.89px;font-size:11px;color:#000;letter-spacing:0.15px;">200</div>
<div class="t" style="left:783.4px;top:76.89px;font-size:11px;color:#000;letter-spacing:0.15px;">400</div>
<div class="t" style="left:838.8px;top:76.89px;font-size:11px;color:#000;letter-spacing:0.15px;">600</div>
<div class="t" style="left:894.2px;top:76.89px;font-size:11px;color:#000;letter-spacing:0.15px;">800</div>
<div class="t" style="left:946.6px;top:76.89px;font-size:11px;color:#000;letter-spacing:0.15px;">1000</div>
<div class="t" style="left:1027.5px;top:78.74px;font-size:8.7px;letter-spacing:-0.006px;color:#000;">millimetres</div>
<div class="a" style="left:1064px;top:76px;width:1px;height:16px;background:#000;"></div>
<div class="a" style="left:1070px;top:75px;width:18px;height:20px;background:#f2f2f2;box-sizing:border-box;border:1px solid;border-color:#fff #6e6e6e #6e6e6e #fff;"></div>
<svg style="left:1070px;top:74px;" width="18" height="20" viewBox="0 0 18 20"><path d="M5 7.5H8M10 7.5H13" stroke="#000" stroke-width="1.2"/><path d="M4.6 10.5H13.4L9 15Z" fill="#000"/></svg>
<svg style="left:277px;top:74px;" width="21" height="612" viewBox="0 0 21 612"><path d="M20 607.5h-2M20 602.5h-2M20 596.5h-2M20 591.5h-6M20 585.5h-2M20 580.5h-2M20 574.5h-2M20 569.5h-2M20 563.5h-4M20 558.5h-2M20 552.5h-2M20 547.5h-2M20 541.5h-2M20 536.5h-6M20 530.5h-2M20 525.5h-2M20 519.5h-2M20 513.5h-2M20 508.5h-4M20 502.5h-2M20 497.5h-2M20 491.5h-2M20 486.5h-2M20 480.5h-6M20 475.5h-2M20 469.5h-2M20 464.5h-2M20 458.5h-2M20 453.5h-4M20 447.5h-2M20 442.5h-2M20 436.5h-2M20 431.5h-2M20 425.5h-6M20 419.5h-2M20 414.5h-2M20 408.5h-2M20 403.5h-2M20 397.5h-4M20 392.5h-2M20 386.5h-2M20 381.5h-2M20 375.5h-2M20 370.5h-6M20 364.5h-2M20 359.5h-2M20 353.5h-2M20 348.5h-2M20 342.5h-4M20 337.5h-2M20 331.5h-2M20 325.5h-2M20 320.5h-2M20 314.5h-6M20 309.5h-2M20 303.5h-2M20 298.5h-2M20 292.5h-2M20 287.5h-4M20 281.5h-2M20 276.5h-2M20 270.5h-2M20 265.5h-2M20 259.5h-6M20 254.5h-2M20 248.5h-2M20 243.5h-2M20 237.5h-2M20 231.5h-4M20 226.5h-2M20 220.5h-2M20 215.5h-2M20 209.5h-2M20 204.5h-6M20 198.5h-2M20 193.5h-2M20 187.5h-2M20 182.5h-2M20 176.5h-4M20 171.5h-2M20 165.5h-2M20 160.5h-2M20 154.5h-2M20 148.5h-6M20 143.5h-2M20 137.5h-2M20 132.5h-2M20 126.5h-2M20 121.5h-4M20 115.5h-2M20 110.5h-2M20 104.5h-2M20 99.5h-2M20 93.5h-6M20 88.5h-2M20 82.5h-2M20 77.5h-2M20 71.5h-2M20 66.5h-4M20 60.5h-2M20 54.5h-2M20 49.5h-2M20 43.5h-2M20 38.5h-6M20 32.5h-2M20 27.5h-2M20 21.5h-2" stroke="#000" stroke-width="1" fill="none"/></svg>
<div class="t" style="left:271.2px;top:659.9px;width:28.1px;font-size:11px;transform:rotate(-90deg);transform-origin:50% 50%;">-1000</div>
<div class="t" style="left:274.3px;top:604.6px;width:22.0px;font-size:11px;transform:rotate(-90deg);transform-origin:50% 50%;">-800</div>
<div class="t" style="left:274.3px;top:549.3px;width:22.0px;font-size:11px;transform:rotate(-90deg);transform-origin:50% 50%;">-600</div>
<div class="t" style="left:274.3px;top:494.0px;width:22.0px;font-size:11px;transform:rotate(-90deg);transform-origin:50% 50%;">-400</div>
<div class="t" style="left:274.3px;top:438.7px;width:22.0px;font-size:11px;transform:rotate(-90deg);transform-origin:50% 50%;">-200</div>
<div class="t" style="left:282.2px;top:383.4px;width:6.1px;font-size:11px;transform:rotate(-90deg);transform-origin:50% 50%;">0</div>
<div class="t" style="left:276.1px;top:328.1px;width:18.4px;font-size:11px;transform:rotate(-90deg);transform-origin:50% 50%;">200</div>
<div class="t" style="left:276.1px;top:272.8px;width:18.4px;font-size:11px;transform:rotate(-90deg);transform-origin:50% 50%;">400</div>
<div class="t" style="left:276.1px;top:217.5px;width:18.4px;font-size:11px;transform:rotate(-90deg);transform-origin:50% 50%;">600</div>
<div class="t" style="left:276.1px;top:162.2px;width:18.4px;font-size:11px;transform:rotate(-90deg);transform-origin:50% 50%;">800</div>
<div class="t" style="left:273.1px;top:106.9px;width:24.5px;font-size:11px;transform:rotate(-90deg);transform-origin:50% 50%;">1000</div>
<div class="a" style="left:279px;top:511px;width:16px;height:1px;background:#000;"></div>
<div class="a" style="left:1071px;top:96px;width:1px;height:590px;background:#fafafa;"></div>
<div class="a" style="left:1087px;top:96px;width:2px;height:590px;background:#fcfcfc;"></div>
<div class="a" style="left:1072px;top:96px;width:15px;height:590px;background:#f0f0f0;"></div>
<div class="a" style="left:1072px;top:112px;width:15px;height:556px;background:#cdcdcd;"></div>
<svg style="left:1072px;top:98px;" width="15" height="12" viewBox="0 0 15 12"><path d="M4.2 8.2L7.6 4.4L11 8.2" stroke="#585858" stroke-width="2.3" fill="none"/></svg>
<svg style="left:1072px;top:672px;" width="15" height="12" viewBox="0 0 15 12"><path d="M4.2 3L7.6 6.8L11 3" stroke="#585858" stroke-width="2.3" fill="none"/></svg>
<div class="a" style="left:278px;top:684px;width:20px;height:18px;background:#f2f2f2;box-sizing:border-box;border:1px solid;border-color:#fff #6e6e6e #6e6e6e #fff;"></div>
<svg style="left:278px;top:684px;" width="20" height="18" viewBox="0 0 20 18"><path d="M6.5 5V7M6.5 9V12" stroke="#000" stroke-width="1.2"/><path d="M9 4.5L13.5 8.5L9 12.5Z" fill="#000"/></svg>
<div class="a" style="left:299px;top:686px;width:772px;height:16px;background:#f0f0f0;"></div>
<div class="a" style="left:316px;top:686px;width:738px;height:15px;background:#cdcdcd;"></div>
<svg style="left:300px;top:687px;" width="12" height="14" viewBox="0 0 12 14"><path d="M8.4 3.4L4.6 6.6L8.4 9.8" stroke="#585858" stroke-width="2.3" fill="none"/></svg>
<svg style="left:1056px;top:687px;" width="12" height="14" viewBox="0 0 12 14"><path d="M4.6 3.4L8.4 6.6L4.6 9.8" stroke="#585858" stroke-width="2.3" fill="none"/></svg>
<!-- canvas artwork -->
<svg style="left:0;top:0" width="1366" height="768" viewBox="0 0 1366 768"><defs><linearGradient id="sg" gradientUnits="userSpaceOnUse" x1="0" y1="-188" x2="0" y2="190"><stop offset="0" stop-color="#fff" stop-opacity="0.05"/><stop offset="0.06" stop-color="#fff" stop-opacity="0.3"/><stop offset="0.125" stop-color="#fff" stop-opacity="0.5"/><stop offset="0.19" stop-color="#fff" stop-opacity="0.8"/><stop offset="0.25" stop-color="#fff" stop-opacity="1"/><stop offset="0.78" stop-color="#fff" stop-opacity="1"/><stop offset="0.87" stop-color="#fff" stop-opacity="0.6"/><stop offset="0.95" stop-color="#fff" stop-opacity="0.2"/><stop offset="1" stop-color="#fff" stop-opacity="0"/></linearGradient><linearGradient id="sg2" gradientUnits="userSpaceOnUse" x1="0" y1="-188" x2="0" y2="190"><stop offset="0.12" stop-color="#fff" stop-opacity="0"/><stop offset="0.28" stop-color="#fff" stop-opacity="0.55"/><stop offset="0.72" stop-color="#fff" stop-opacity="0.55"/><stop offset="0.86" stop-color="#fff" stop-opacity="0"/></linearGradient><linearGradient id="mg" gradientUnits="userSpaceOnUse" x1="0" y1="-108" x2="0" y2="136"><stop offset="0" stop-color="#fff" stop-opacity="0.05"/><stop offset="0.07" stop-color="#fff" stop-opacity="0.3"/><stop offset="0.17" stop-color="#fff" stop-opacity="0.45"/><stop offset="0.31" stop-color="#fff" stop-opacity="0.72"/><stop offset="0.41" stop-color="#fff" stop-opacity="0.88"/><stop offset="0.77" stop-color="#fff" stop-opacity="0.88"/><stop offset="0.89" stop-color="#fff" stop-opacity="0.4"/><stop offset="1" stop-color="#fff" stop-opacity="0"/></linearGradient><filter id="bl" x="-20%" y="-5%" width="140%" height="110%"><feGaussianBlur stdDeviation="1.8"/></filter><clipPath id="pc"><rect x="614.4" y="192.4" width="138.2" height="394.2"/></clipPath><linearGradient id="bvT" x1="0" y1="0" x2="0" y2="1"><stop offset="0" stop-color="#e8e8e8"/><stop offset="0.2" stop-color="#dcdcdc"/><stop offset="0.3" stop-color="#b0b0b0"/><stop offset="0.55" stop-color="#6a6a6a"/><stop offset="0.78" stop-color="#1c1c1c"/><stop offset="0.86" stop-color="#000"/></linearGradient><linearGradient id="bvL" x1="0" y1="0" x2="1" y2="0"><stop offset="0" stop-color="#e8e8e8"/><stop offset="0.2" stop-color="#dcdcdc"/><stop offset="0.3" stop-color="#b0b0b0"/><stop offset="0.55" stop-color="#6a6a6a"/><stop offset="0.78" stop-color="#1c1c1c"/><stop offset="0.86" stop-color="#000"/></linearGradient><linearGradient id="bvB" x1="0" y1="1" x2="0" y2="0"><stop offset="0" stop-color="#e8e8e8"/><stop offset="0.2" stop-color="#dcdcdc"/><stop offset="0.3" stop-color="#b0b0b0"/><stop offset="0.55" stop-color="#6a6a6a"/><stop offset="0.78" stop-color="#1c1c1c"/><stop offset="0.86" stop-color="#000"/></linearGradient><linearGradient id="bvR" x1="1" y1="0" x2="0" y2="0"><stop offset="0" stop-color="#e8e8e8"/><stop offset="0.2" stop-color="#dcdcdc"/><stop offset="0.3" stop-color="#b0b0b0"/><stop offset="0.55" stop-color="#6a6a6a"/><stop offset="0.78" stop-color="#1c1c1c"/><stop offset="0.86" stop-color="#000"/></linearGradient></defs><rect x="506.5" y="108.5" width="353" height="563" fill="#fffd82" stroke="#000" stroke-width="1"/><rect x="577" y="155" width="213" height="469" fill="#3d3d3d"/><polygon points="603,181 764,181 754,191 613,191" fill="url(#bvT)"/><polygon points="603,598 764,598 754,588 613,588" fill="url(#bvB)"/><polygon points="603,181 613,191 613,588 603,598" fill="url(#bvL)"/><polygon points="764,181 754,191 754,588 764,598" fill="url(#bvR)"/><rect x="613.7" y="191.7" width="139.6" height="395.6" fill="#585858" stroke="#f8f8b0" stroke-width="1.5"/><g clip-path="url(#pc)"><g filter="url(#bl)" fill="none" stroke-linecap="round"><path transform="translate(686 125)" d="M-66.0 -188.0C-64.2 -182.8 -58.5 -167.0 -55.0 -157.0C-51.5 -147.0 -47.6 -137.5 -45.0 -128.0C-42.4 -118.5 -40.8 -108.8 -39.5 -100.0C-38.2 -91.2 -38.1 -82.0 -37.5 -75.0C-36.9 -68.0 -36.8 -63.5 -36.0 -58.0C-35.2 -52.5 -34.7 -47.8 -32.5 -42.0C-30.3 -36.2 -27.1 -29.0 -23.0 -23.0C-18.9 -17.0 -12.8 -10.9 -8.0 -6.0C-3.2 -1.1 1.5 2.0 6.0 6.5C10.5 11.0 15.4 15.8 19.0 21.0C22.6 26.2 25.4 31.8 27.5 38.0C29.6 44.2 30.5 50.5 31.5 58.0C32.5 65.5 32.6 74.5 33.4 83.0C34.1 91.5 34.9 101.0 36.0 109.0C37.1 117.0 38.2 123.5 40.0 131.0C41.8 138.5 44.2 146.0 47.0 154.0C49.8 162.0 54.5 173.0 57.0 179.0C59.5 185.0 61.2 188.2 62.0 190.0" stroke="url(#sg2)" stroke-width="9"/><path transform="translate(686 125)" d="M-66.0 -188.0C-64.2 -182.8 -58.5 -167.0 -55.0 -157.0C-51.5 -147.0 -47.6 -137.5 -45.0 -128.0C-42.4 -118.5 -40.8 -108.8 -39.5 -100.0C-38.2 -91.2 -38.1 -82.0 -37.5 -75.0C-36.9 -68.0 -36.8 -63.5 -36.0 -58.0C-35.2 -52.5 -34.7 -47.8 -32.5 -42.0C-30.3 -36.2 -27.1 -29.0 -23.0 -23.0C-18.9 -17.0 -12.8 -10.9 -8.0 -6.0C-3.2 -1.1 1.5 2.0 6.0 6.5C10.5 11.0 15.4 15.8 19.0 21.0C22.6 26.2 25.4 31.8 27.5 38.0C29.6 44.2 30.5 50.5 31.5 58.0C32.5 65.5 32.6 74.5 33.4 83.0C34.1 91.5 34.9 101.0 36.0 109.0C37.1 117.0 38.2 123.5 40.0 131.0C41.8 138.5 44.2 146.0 47.0 154.0C49.8 162.0 54.5 173.0 57.0 179.0C59.5 185.0 61.2 188.2 62.0 190.0" stroke="url(#sg)" stroke-width="5.6"/><path transform="translate(686 258)" d="M-66.0 -188.0C-64.2 -182.8 -58.5 -167.0 -55.0 -157.0C-51.5 -147.0 -47.6 -137.5 -45.0 -128.0C-42.4 -118.5 -40.8 -108.8 -39.5 -100.0C-38.2 -91.2 -38.1 -82.0 -37.5 -75.0C-36.9 -68.0 -36.8 -63.5 -36.0 -58.0C-35.2 -52.5 -34.7 -47.8 -32.5 -42.0C-30.3 -36.2 -27.1 -29.0 -23.0 -23.0C-18.9 -17.0 -12.8 -10.9 -8.0 -6.0C-3.2 -1.1 1.5 2.0 6.0 6.5C10.5 11.0 15.4 15.8 19.0 21.0C22.6 26.2 25.4 31.8 27.5 38.0C29.6 44.2 30.5 50.5 31.5 58.0C32.5 65.5 32.6 74.5 33.4 83.0C34.1 91.5 34.9 101.0 36.0 109.0C37.1 117.0 38.2 123.5 40.0 131.0C41.8 138.5 44.2 146.0 47.0 154.0C49.8 162.0 54.5 173.0 57.0 179.0C59.5 185.0 61.2 188.2 62.0 190.0" stroke="url(#sg2)" stroke-width="9"/><path transform="translate(686 258)" d="M-66.0 -188.0C-64.2 -182.8 -58.5 -167.0 -55.0 -157.0C-51.5 -147.0 -47.6 -137.5 -45.0 -128.0C-42.4 -118.5 -40.8 -108.8 -39.5 -100.0C-38.2 -91.2 -38.1 -82.0 -37.5 -75.0C-36.9 -68.0 -36.8 -63.5 -36.0 -58.0C-35.2 -52.5 -34.7 -47.8 -32.5 -42.0C-30.3 -36.2 -27.1 -29.0 -23.0 -23.0C-18.9 -17.0 -12.8 -10.9 -8.0 -6.0C-3.2 -1.1 1.5 2.0 6.0 6.5C10.5 11.0 15.4 15.8 19.0 21.0C22.6 26.2 25.4 31.8 27.5 38.0C29.6 44.2 30.5 50.5 31.5 58.0C32.5 65.5 32.6 74.5 33.4 83.0C34.1 91.5 34.9 101.0 36.0 109.0C37.1 117.0 38.2 123.5 40.0 131.0C41.8 138.5 44.2 146.0 47.0 154.0C49.8 162.0 54.5 173.0 57.0 179.0C59.5 185.0 61.2 188.2 62.0 190.0" stroke="url(#sg)" stroke-width="5.6"/><path transform="translate(686 391)" d="M-66.0 -188.0C-64.2 -182.8 -58.5 -167.0 -55.0 -157.0C-51.5 -147.0 -47.6 -137.5 -45.0 -128.0C-42.4 -118.5 -40.8 -108.8 -39.5 -100.0C-38.2 -91.2 -38.1 -82.0 -37.5 -75.0C-36.9 -68.0 -36.8 -63.5 -36.0 -58.0C-35.2 -52.5 -34.7 -47.8 -32.5 -42.0C-30.3 -36.2 -27.1 -29.0 -23.0 -23.0C-18.9 -17.0 -12.8 -10.9 -8.0 -6.0C-3.2 -1.1 1.5 2.0 6.0 6.5C10.5 11.0 15.4 15.8 19.0 21.0C22.6 26.2 25.4 31.8 27.5 38.0C29.6 44.2 30.5 50.5 31.5 58.0C32.5 65.5 32.6 74.5 33.4 83.0C34.1 91.5 34.9 101.0 36.0 109.0C37.1 117.0 38.2 123.5 40.0 131.0C41.8 138.5 44.2 146.0 47.0 154.0C49.8 162.0 54.5 173.0 57.0 179.0C59.5 185.0 61.2 188.2 62.0 190.0" stroke="url(#sg2)" stroke-width="9"/><path transform="translate(686 391)" d="M-66.0 -188.0C-64.2 -182.8 -58.5 -167.0 -55.0 -157.0C-51.5 -147.0 -47.6 -137.5 -45.0 -128.0C-42.4 -118.5 -40.8 -108.8 -39.5 -100.0C-38.2 -91.2 -38.1 -82.0 -37.5 -75.0C-36.9 -68.0 -36.8 -63.5 -36.0 -58.0C-35.2 -52.5 -34.7 -47.8 -32.5 -42.0C-30.3 -36.2 -27.1 -29.0 -23.0 -23.0C-18.9 -17.0 -12.8 -10.9 -8.0 -6.0C-3.2 -1.1 1.5 2.0 6.0 6.5C10.5 11.0 15.4 15.8 19.0 21.0C22.6 26.2 25.4 31.8 27.5 38.0C29.6 44.2 30.5 50.5 31.5 58.0C32.5 65.5 32.6 74.5 33.4 83.0C34.1 91.5 34.9 101.0 36.0 109.0C37.1 117.0 38.2 123.5 40.0 131.0C41.8 138.5 44.2 146.0 47.0 154.0C49.8 162.0 54.5 173.0 57.0 179.0C59.5 185.0 61.2 188.2 62.0 190.0" stroke="url(#sg)" stroke-width="5.6"/><path transform="translate(686 524)" d="M-66.0 -188.0C-64.2 -182.8 -58.5 -167.0 -55.0 -157.0C-51.5 -147.0 -47.6 -137.5 -45.0 -128.0C-42.4 -118.5 -40.8 -108.8 -39.5 -100.0C-38.2 -91.2 -38.1 -82.0 -37.5 -75.0C-36.9 -68.0 -36.8 -63.5 -36.0 -58.0C-35.2 -52.5 -34.7 -47.8 -32.5 -42.0C-30.3 -36.2 -27.1 -29.0 -23.0 -23.0C-18.9 -17.0 -12.8 -10.9 -8.0 -6.0C-3.2 -1.1 1.5 2.0 6.0 6.5C10.5 11.0 15.4 15.8 19.0 21.0C22.6 26.2 25.4 31.8 27.5 38.0C29.6 44.2 30.5 50.5 31.5 58.0C32.5 65.5 32.6 74.5 33.4 83.0C34.1 91.5 34.9 101.0 36.0 109.0C37.1 117.0 38.2 123.5 40.0 131.0C41.8 138.5 44.2 146.0 47.0 154.0C49.8 162.0 54.5 173.0 57.0 179.0C59.5 185.0 61.2 188.2 62.0 190.0" stroke="url(#sg2)" stroke-width="9"/><path transform="translate(686 524)" d="M-66.0 -188.0C-64.2 -182.8 -58.5 -167.0 -55.0 -157.0C-51.5 -147.0 -47.6 -137.5 -45.0 -128.0C-42.4 -118.5 -40.8 -108.8 -39.5 -100.0C-38.2 -91.2 -38.1 -82.0 -37.5 -75.0C-36.9 -68.0 -36.8 -63.5 -36.0 -58.0C-35.2 -52.5 -34.7 -47.8 -32.5 -42.0C-30.3 -36.2 -27.1 -29.0 -23.0 -23.0C-18.9 -17.0 -12.8 -10.9 -8.0 -6.0C-3.2 -1.1 1.5 2.0 6.0 6.5C10.5 11.0 15.4 15.8 19.0 21.0C22.6 26.2 25.4 31.8 27.5 38.0C29.6 44.2 30.5 50.5 31.5 58.0C32.5 65.5 32.6 74.5 33.4 83.0C34.1 91.5 34.9 101.0 36.0 109.0C37.1 117.0 38.2 123.5 40.0 131.0C41.8 138.5 44.2 146.0 47.0 154.0C49.8 162.0 54.5 173.0 57.0 179.0C59.5 185.0 61.2 188.2 62.0 190.0" stroke="url(#sg)" stroke-width="5.6"/><path transform="translate(686 657)" d="M-66.0 -188.0C-64.2 -182.8 -58.5 -167.0 -55.0 -157.0C-51.5 -147.0 -47.6 -137.5 -45.0 -128.0C-42.4 -118.5 -40.8 -108.8 -39.5 -100.0C-38.2 -91.2 -38.1 -82.0 -37.5 -75.0C-36.9 -68.0 -36.8 -63.5 -36.0 -58.0C-35.2 -52.5 -34.7 -47.8 -32.5 -42.0C-30.3 -36.2 -27.1 -29.0 -23.0 -23.0C-18.9 -17.0 -12.8 -10.9 -8.0 -6.0C-3.2 -1.1 1.5 2.0 6.0 6.5C10.5 11.0 15.4 15.8 19.0 21.0C22.6 26.2 25.4 31.8 27.5 38.0C29.6 44.2 30.5 50.5 31.5 58.0C32.5 65.5 32.6 74.5 33.4 83.0C34.1 91.5 34.9 101.0 36.0 109.0C37.1 117.0 38.2 123.5 40.0 131.0C41.8 138.5 44.2 146.0 47.0 154.0C49.8 162.0 54.5 173.0 57.0 179.0C59.5 185.0 61.2 188.2 62.0 190.0" stroke="url(#sg2)" stroke-width="9"/><path transform="translate(686 657)" d="M-66.0 -188.0C-64.2 -182.8 -58.5 -167.0 -55.0 -157.0C-51.5 -147.0 -47.6 -137.5 -45.0 -128.0C-42.4 -118.5 -40.8 -108.8 -39.5 -100.0C-38.2 -91.2 -38.1 -82.0 -37.5 -75.0C-36.9 -68.0 -36.8 -63.5 -36.0 -58.0C-35.2 -52.5 -34.7 -47.8 -32.5 -42.0C-30.3 -36.2 -27.1 -29.0 -23.0 -23.0C-18.9 -17.0 -12.8 -10.9 -8.0 -6.0C-3.2 -1.1 1.5 2.0 6.0 6.5C10.5 11.0 15.4 15.8 19.0 21.0C22.6 26.2 25.4 31.8 27.5 38.0C29.6 44.2 30.5 50.5 31.5 58.0C32.5 65.5 32.6 74.5 33.4 83.0C34.1 91.5 34.9 101.0 36.0 109.0C37.1 117.0 38.2 123.5 40.0 131.0C41.8 138.5 44.2 146.0 47.0 154.0C49.8 162.0 54.5 173.0 57.0 179.0C59.5 185.0 61.2 188.2 62.0 190.0" stroke="url(#sg)" stroke-width="5.6"/><path transform="translate(683 43)" d="M-55.0 -108.0C-52.5 -104.7 -44.8 -95.0 -40.0 -88.0C-35.2 -81.0 -30.5 -75.2 -26.0 -66.0C-21.5 -56.8 -16.7 -42.8 -13.0 -33.0C-9.3 -23.2 -6.4 -15.7 -4.0 -7.0C-1.6 1.7 -0.8 10.3 1.2 19.0C3.1 27.7 5.1 36.3 7.7 45.0C10.3 53.7 12.9 62.3 16.8 71.0C20.7 79.7 25.6 88.3 31.0 97.0C36.4 105.7 43.8 116.5 49.0 123.0C54.2 129.5 59.8 133.8 62.0 136.0" stroke="url(#mg)" stroke-width="6.2"/><path transform="translate(683 176)" d="M-55.0 -108.0C-52.5 -104.7 -44.8 -95.0 -40.0 -88.0C-35.2 -81.0 -30.5 -75.2 -26.0 -66.0C-21.5 -56.8 -16.7 -42.8 -13.0 -33.0C-9.3 -23.2 -6.4 -15.7 -4.0 -7.0C-1.6 1.7 -0.8 10.3 1.2 19.0C3.1 27.7 5.1 36.3 7.7 45.0C10.3 53.7 12.9 62.3 16.8 71.0C20.7 79.7 25.6 88.3 31.0 97.0C36.4 105.7 43.8 116.5 49.0 123.0C54.2 129.5 59.8 133.8 62.0 136.0" stroke="url(#mg)" stroke-width="6.2"/><path transform="translate(683 309)" d="M-55.0 -108.0C-52.5 -104.7 -44.8 -95.0 -40.0 -88.0C-35.2 -81.0 -30.5 -75.2 -26.0 -66.0C-21.5 -56.8 -16.7 -42.8 -13.0 -33.0C-9.3 -23.2 -6.4 -15.7 -4.0 -7.0C-1.6 1.7 -0.8 10.3 1.2 19.0C3.1 27.7 5.1 36.3 7.7 45.0C10.3 53.7 12.9 62.3 16.8 71.0C20.7 79.7 25.6 88.3 31.0 97.0C36.4 105.7 43.8 116.5 49.0 123.0C54.2 129.5 59.8 133.8 62.0 136.0" stroke="url(#mg)" stroke-width="6.2"/><path transform="translate(683 442)" d="M-55.0 -108.0C-52.5 -104.7 -44.8 -95.0 -40.0 -88.0C-35.2 -81.0 -30.5 -75.2 -26.0 -66.0C-21.5 -56.8 -16.7 -42.8 -13.0 -33.0C-9.3 -23.2 -6.4 -15.7 -4.0 -7.0C-1.6 1.7 -0.8 10.3 1.2 19.0C3.1 27.7 5.1 36.3 7.7 45.0C10.3 53.7 12.9 62.3 16.8 71.0C20.7 79.7 25.6 88.3 31.0 97.0C36.4 105.7 43.8 116.5 49.0 123.0C54.2 129.5 59.8 133.8 62.0 136.0" stroke="url(#mg)" stroke-width="6.2"/><path transform="translate(683 575)" d="M-55.0 -108.0C-52.5 -104.7 -44.8 -95.0 -40.0 -88.0C-35.2 -81.0 -30.5 -75.2 -26.0 -66.0C-21.5 -56.8 -16.7 -42.8 -13.0 -33.0C-9.3 -23.2 -6.4 -15.7 -4.0 -7.0C-1.6 1.7 -0.8 10.3 1.2 19.0C3.1 27.7 5.1 36.3 7.7 45.0C10.3 53.7 12.9 62.3 16.8 71.0C20.7 79.7 25.6 88.3 31.0 97.0C36.4 105.7 43.8 116.5 49.0 123.0C54.2 129.5 59.8 133.8 62.0 136.0" stroke="url(#mg)" stroke-width="6.2"/></g></g></svg>
<!-- right layers panel -->
<div class="a" style="left:1093px;top:43px;width:1px;height:704px;background:#a8a8a8;"></div>
<div class="a" style="left:1094px;top:43px;width:2px;height:678px;background:#fcfcfc;"></div>
<div class="a" style="left:1094px;top:43px;width:272px;height:1px;background:#fafafa;"></div>
<div class="a" style="left:1102px;top:45px;width:243px;height:15px;background:#34558b;"></div>
<div class="t" style="left:1106.5px;top:46.74px;font-size:12px;letter-spacing:0.091px;font-weight:bold;color:#fff;">Vectors</div>
<div class="a" style="left:1327px;top:46px;width:13px;height:13px;background:#c6cdd8;box-sizing:border-box;border:1px solid;border-color:#eef2f8 #6a7a90 #6a7a90 #eef2f8;"></div>
<svg style="left:1327px;top:46px;" width="13" height="13" viewBox="0 0 13 13"><path d="M3 9.5L6.5 3L10 9.5Z" fill="#4a5664"/></svg>
<div class="a" style="left:1103px;top:61px;width:239px;height:23px;background:#fff;box-sizing:border-box;border-style:solid;border-width:2px 1px 1px 2px;border-color:#6e6e6e #fbfbfb #fbfbfb #6e6e6e;"></div>
<div class="a" style="left:1325px;top:62.5px;width:17px;height:20px;background:#f0f0f0;box-sizing:border-box;border:1px solid;border-color:#fff #5a5a5a #5a5a5a #fff;box-shadow:inset -1px -1px 0 #a0a0a0;"></div>
<svg style="left:1325px;top:62.5px;" width="17" height="20" viewBox="0 0 17 20"><path d="M4.5 8H12.5L8.5 12.5Z" fill="#000"/></svg>
<div class="t" style="left:1105.2px;top:65.04px;font-size:12px;letter-spacing:0.114px;color:#000;">Default Sheet</div>
<div class="a" style="left:1102px;top:112px;width:243px;height:26px;background:#dcdcdc;"></div>
<div class="a" style="left:1105px;top:117px;width:18px;height:17px;background:#e4e4e4;box-sizing:border-box;border:1px solid;border-color:#fff #8a8a8a #8a8a8a #fff;"></div>
<svg style="left:1105px;top:117px;" width="18" height="17" viewBox="0 0 18 17"><circle cx="9.2" cy="8.5" r="6.4" fill="#000"/></svg>
<div class="t" style="left:1128.3px;top:119.64px;font-size:12px;color:#111;">Default Layer</div>
<div class="a" style="left:1102px;top:172px;width:243px;height:15px;background:#34558b;"></div>
<div class="t" style="left:1106.5px;top:173.74px;font-size:12px;letter-spacing:-0.192px;font-weight:bold;color:#fff;">Bitmaps</div>
<div class="a" style="left:1327px;top:173px;width:13px;height:13px;background:#c6cdd8;box-sizing:border-box;border:1px solid;border-color:#eef2f8 #6a7a90 #6a7a90 #eef2f8;"></div>
<svg style="left:1327px;top:173px;" width="13" height="13" viewBox="0 0 13 13"><path d="M3 3.5L6.5 9.5L10 3.5Z" fill="#4a5664"/></svg>
<div class="a" style="left:1102px;top:203px;width:243px;height:15px;background:#34558b;"></div>
<div class="t" style="left:1106.5px;top:204.74px;font-size:12px;letter-spacing:-0.193px;font-weight:bold;color:#fff;">Reliefs</div>
<div class="a" style="left:1327px;top:204px;width:13px;height:13px;background:#c6cdd8;box-sizing:border-box;border:1px solid;border-color:#eef2f8 #6a7a90 #6a7a90 #eef2f8;"></div>
<svg style="left:1327px;top:204px;" width="13" height="13" viewBox="0 0 13 13"><path d="M3 9.5L6.5 3L10 9.5Z" fill="#4a5664"/></svg>
<div class="a" style="left:1103px;top:219px;width:239px;height:23px;background:#fff;box-sizing:border-box;border-style:solid;border-width:2px 1px 1px 2px;border-color:#6e6e6e #fbfbfb #fbfbfb #6e6e6e;"></div>
<div class="a" style="left:1325px;top:220.5px;width:17px;height:20px;background:#f0f0f0;box-sizing:border-box;border:1px solid;border-color:#fff #5a5a5a #5a5a5a #fff;box-shadow:inset -1px -1px 0 #a0a0a0;"></div>
<svg style="left:1325px;top:220.5px;" width="17" height="20" viewBox="0 0 17 20"><path d="M4.5 8H12.5L8.5 12.5Z" fill="#000"/></svg>
<div class="t" style="left:1105.2px;top:223.04px;font-size:12px;letter-spacing:0.090px;color:#000;">Front Relief</div>
<div class="a" style="left:1102px;top:270px;width:243px;height:26px;background:#dcdcdc;"></div>
<svg style="left:1138.4px;top:279.3px;" width="6" height="9" viewBox="0 0 6 9"><path d="M0.5 0.5L5 4.5L0.5 8.5Z" fill="#000"/></svg>
<div class="t" style="left:1149.5px;top:277.84px;font-size:12px;letter-spacing:-0.053px;color:#111;">Relief Layer 1</div>
<svg style="left:1312px;top:141px;" width="12" height="12" viewBox="0 0 12 12"><rect x="0" y="0" width="12" height="12" rx="1.5" fill="#1f4f9f"/><rect x="0.5" y="0.5" width="11" height="11" rx="1.5" fill="none" stroke="#153a7c"/><path d="M6 9.5V3.5M3 6L6 3L9 6" stroke="#fff" stroke-width="1.8" fill="none"/></svg>
<svg style="left:1330px;top:141px;" width="12" height="12" viewBox="0 0 12 12"><rect x="0" y="0" width="12" height="12" rx="1.5" fill="#1f4f9f"/><rect x="0.5" y="0.5" width="11" height="11" rx="1.5" fill="none" stroke="#153a7c"/><path d="M6 2.5V8.5M3 6L6 9L9 6" stroke="#fff" stroke-width="1.8" fill="none"/></svg>
<svg style="left:1312px;top:299px;" width="12" height="12" viewBox="0 0 12 12"><rect x="0" y="0" width="12" height="12" rx="1.5" fill="#1f4f9f"/><rect x="0.5" y="0.5" width="11" height="11" rx="1.5" fill="none" stroke="#153a7c"/><path d="M6 9.5V3.5M3 6L6 3L9 6" stroke="#fff" stroke-width="1.8" fill="none"/></svg>
<svg style="left:1330px;top:299px;" width="12" height="12" viewBox="0 0 12 12"><rect x="0" y="0" width="12" height="12" rx="1.5" fill="#1f4f9f"/><rect x="0.5" y="0.5" width="11" height="11" rx="1.5" fill="none" stroke="#153a7c"/><path d="M6 2.5V8.5M3 6L6 9L9 6" stroke="#fff" stroke-width="1.8" fill="none"/></svg>
<svg style="left:1094px;top:721px" width="272" height="26"><rect x="0" y="0" width="272" height="26" fill="#dadada"/><rect x="0" y="0" width="272" height="26" fill="#fff" filter="url(#nz)"/><rect x="0" y="0" width="272" height="26" fill="#fff" filter="url(#nz2)"/></svg>
<div class="a" style="left:1143px;top:721px;width:223px;height:1px;background:#a0a0a0;"></div>
<div class="a" style="left:1094px;top:721px;width:49px;height:25px;background:#f0f0f0;border-radius:0 0 6px 4px;box-shadow:1px 1px 0 #b8b8b8;"></div>
<div class="a" style="left:1143px;top:721px;width:48px;height:25px;background:#f0f0f0;border:1px solid #a6a6a6;border-top-color:#a0a0a0;border-radius:0 0 6px 6px;box-sizing:border-box;"></div>
<div class="t" style="left:1103px;top:726.84px;font-size:12px;letter-spacing:-0.503px;">Layers</div>
<div class="t" style="left:1151px;top:727.84px;font-size:12px;letter-spacing:0.051px;">Add In</div>
<div class="a" style="left:1090px;top:747px;width:276px;height:1px;background:#b4b4b4;"></div>
<!-- right panel icons -->
<svg style="left:0;top:0" width="1366" height="330" viewBox="0 0 1366 330"><defs><radialGradient id="blb" cx="0.45" cy="0.35" r="0.7"><stop offset="0" stop-color="#fffbd0"/><stop offset="0.5" stop-color="#ffe23a"/><stop offset="1" stop-color="#e8a800"/></radialGradient><linearGradient id="bkt" x1="0" y1="0" x2="1" y2="0"><stop offset="0" stop-color="#7aa4ee"/><stop offset="0.5" stop-color="#4a82e0"/><stop offset="1" stop-color="#3a68c8"/></linearGradient></defs><g transform="translate(1104 91)"><path d="M5 13L15 11V15.5L4 16.5Z" fill="#a8a8a8" opacity="0.7" filter="url(#sh)"/><path d="M0 0H5L7.5 3V7L11 10V16H0Z" fill="url(#docg)"/><path d="M5 0V3H7.5Z" fill="#e8eef8"/><path d="M3.5 16V5M7.5 16V8" stroke="#dfe8f4" stroke-width="0.8" opacity="0.7"/></g><g transform="translate(1140 92.3)"><path d="M3 10.5L15 8.5L14 12L2 13Z" fill="#a0a0a0" opacity="0.6" filter="url(#sh)"/><path d="M1.5 1.5Q1.5 0.5 3 0.5H6L7.5 1.8H12Q13 1.8 13 3V6.5L2 10Z" fill="#f2e21c"/><path d="M1 11.5Q0.5 10 2 7.8Q3 6.3 5.5 6.3H15Q16.2 6.3 15.6 7.6L14 10Q13.4 11 12 11.1L2.5 12.2Q1.3 12.3 1 11.5Z" fill="url(#fold)"/></g><g transform="translate(1177 93)"><path d="M9 9L16 7L15 10.5L8 12Z" fill="#a0a0a0" opacity="0.6" filter="url(#sh)"/><path d="M0 1Q0 0 1 0H11.5Q12.5 0 12.5 1V11.5H1.5L0 10.2Z" fill="#2458ba"/><rect x="2.5" y="0.8" width="7.5" height="5" fill="#e3e6ea"/><rect x="3" y="7.5" width="6.5" height="4" fill="#c9ced6"/><rect x="4.2" y="8.3" width="1.8" height="2.8" fill="#2458ba"/></g><g transform="translate(1213 90.6)"><path d="M4 14L16 12V16L4 17Z" fill="#a0a0a0" opacity="0.6" filter="url(#sh)"/><path d="M1.5 1L8.5 0L10 3.5L12.5 4L13.5 9L15 15L5 16L1.5 14Z" fill="#c09a68"/><path d="M3.5 3L9.5 2.5L10.5 6L13 8.5L13.5 14.5L5 15.5Z" fill="#b08656"/><path d="M1.5 1V14" stroke="#8a6a40" stroke-width="1.6" stroke-dasharray="1 1"/></g><g transform="translate(1252 90.6)"><path d="M0 0H8L11.5 3V16H0Z" fill="#8f9fbc"/><path d="M0 0H8L11.5 3V8H0Z" fill="#b4c0d4" opacity="0.7"/><path d="M8 0V3H11.5Z" fill="#e4eaf4"/><circle cx="5.8" cy="7.5" r="4" fill="url(#blb)"/><path d="M4 10.5H7.6L7.2 13.5H4.4Z" fill="#e0a010"/><rect x="4.4" y="13.2" width="2.8" height="2.4" fill="#2a1a08"/></g><g transform="translate(1289.5 92.3)"><path d="M0.5 2.5L1.8 11Q5.2 13 8.8 11L10 2.5Z" fill="url(#bkt)"/><ellipse cx="5.3" cy="2.5" rx="4.9" ry="2" fill="#9cc0f8" stroke="#4a7ad8" stroke-width="0.8"/><ellipse cx="5.3" cy="2.7" rx="2.6" ry="0.9" fill="#e8f2ff"/></g><g transform="translate(1322.5 90)"><rect x="0" y="0" width="17.5" height="16.5" fill="#fbf4de"/><path d="M0 16.5V0H17.5" stroke="#b8b8b8" stroke-width="0.8" fill="none"/><circle cx="6" cy="7.3" r="4.8" fill="url(#blb)"/><path d="M3.8 11H8.2L7.6 13.5H4.4Z" fill="#e0a010"/><rect x="4.2" y="13.2" width="3.4" height="3" fill="#2a1a08"/><circle cx="12.6" cy="5.3" r="4.8" fill="url(#blb)"/><path d="M10.4 9H14.8L14.2 11.5H11Z" fill="#e0a010"/><rect x="10.8" y="11.2" width="3.4" height="3.4" fill="#2a1a08"/></g><rect x="1287" y="116" width="17.5" height="17.5" fill="#dadada"/><path d="M1287.5 133.5V116.5H1304.5" stroke="#fff" stroke-width="1" fill="none"/><path d="M1304 116.5V133H1287.5" stroke="#8a8a8a" stroke-width="1" fill="none"/><g transform="translate(1287 116)"><path d="M6 9V6Q6 3 9 3Q12 3 12 6V7.5" stroke="#9a9a9a" stroke-width="1.8" fill="none"/><rect x="4.5" y="8.5" width="9" height="7" fill="#8e8e8e"/><rect x="5.5" y="9.5" width="3" height="5" fill="#b8b8b8"/><path d="M9.5 15.5V11.8M7.6 13L9.5 10.6L11.4 13Z" stroke="#000" stroke-width="1.2" fill="#000"/></g><rect x="1305.5" y="116" width="17" height="17.5" fill="#e6e6e6"/><g transform="translate(1305.5 116)"><path d="M2.5 0.5V17M0 14.5H16.5" stroke="#000" stroke-width="1.1" stroke-dasharray="2.2 1.4" fill="none"/><path d="M15.2 2.4L9 8.6" stroke="#000" stroke-width="2.6"/><path d="M4.2 13.3L7 6.4L11.2 10.6Z" fill="#000"/></g><rect x="1323" y="116" width="17" height="17" fill="#e2e2e2"/><path d="M1323.5 133V116.5H1340" stroke="#fafafa" stroke-width="1" fill="none"/><path d="M1339.5 116.5V132.5H1323" stroke="#c4c4c4" stroke-width="1" fill="none"/><g transform="translate(1323 116)"><circle cx="8.5" cy="7" r="4.9" fill="url(#blb)"/><path d="M6.2 10.8H10.8L10.2 13.2H6.8Z" fill="#e0a010"/><rect x="6.7" y="13" width="3.6" height="2.8" fill="#2a1a08"/></g><g transform="translate(1104 249)"><path d="M5 13L15 11V15.5L4 16.5Z" fill="#a8a8a8" opacity="0.7" filter="url(#sh)"/><path d="M0 0H5L7.5 3V7L11 10V16H0Z" fill="url(#docg)"/><path d="M5 0V3H7.5Z" fill="#e8eef8"/><path d="M3.5 16V5M7.5 16V8" stroke="#dfe8f4" stroke-width="0.8" opacity="0.7"/></g><g transform="translate(1130 250.3)"><path d="M3 10.5L15 8.5L14 12L2 13Z" fill="#a0a0a0" opacity="0.6" filter="url(#sh)"/><path d="M1.5 1.5Q1.5 0.5 3 0.5H6L7.5 1.8H12Q13 1.8 13 3V6.5L2 10Z" fill="#f2e21c"/><path d="M1 11.5Q0.5 10 2 7.8Q3 6.3 5.5 6.3H15Q16.2 6.3 15.6 7.6L14 10Q13.4 11 12 11.1L2.5 12.2Q1.3 12.3 1 11.5Z" fill="url(#fold)"/></g><g transform="translate(1157.8 251)"><path d="M9 9L16 7L15 10.5L8 12Z" fill="#a0a0a0" opacity="0.6" filter="url(#sh)"/><path d="M0 1Q0 0 1 0H11.5Q12.5 0 12.5 1V11.5H1.5L0 10.2Z" fill="#2458ba"/><rect x="2.5" y="0.8" width="7.5" height="5" fill="#e3e6ea"/><rect x="3" y="7.5" width="6.5" height="4" fill="#c9ced6"/><rect x="4.2" y="8.3" width="1.8" height="2.8" fill="#2458ba"/></g><g transform="translate(1185 248.6)"><path d="M4 14L16 12V16L4 17Z" fill="#a0a0a0" opacity="0.6" filter="url(#sh)"/><path d="M1.5 1L8.5 0L10 3.5L12.5 4L13.5 9L15 15L5 16L1.5 14Z" fill="#c09a68"/><path d="M3.5 3L9.5 2.5L10.5 6L13 8.5L13.5 14.5L5 15.5Z" fill="#b08656"/><path d="M1.5 1V14" stroke="#8a6a40" stroke-width="1.6" stroke-dasharray="1 1"/></g><g transform="translate(1212.6 249)"><path d="M0.5 11L8 7.5L17 11L9 15.5Z" fill="#b01414"/><path d="M3.8 11L8.2 9L13.4 11L8.8 13.6Z" fill="#f8d050"/><path d="M6.5 10.5H10.8L8.7 13Z" fill="#e07010"/><path d="M1 5L8.5 0.5L17.5 4.5L9.5 9.5Z" fill="#8c98e8" stroke="#6a74c8" stroke-width="0.7"/></g><g transform="translate(1243 248.6)"><path d="M0 0H8L11.5 3V16H0Z" fill="#8f9fbc"/><path d="M0 0H8L11.5 3V8H0Z" fill="#b4c0d4" opacity="0.7"/><path d="M8 0V3H11.5Z" fill="#e4eaf4"/><circle cx="5.8" cy="7.5" r="4" fill="url(#blb)"/><path d="M4 10.5H7.6L7.2 13.5H4.4Z" fill="#e0a010"/><rect x="4.4" y="13.2" width="2.8" height="2.4" fill="#2a1a08"/></g><g transform="translate(1270 249.5)"><rect x="0" y="0" width="14" height="14.5" fill="#050505"/><circle cx="4.2" cy="2.6" r="1.5" fill="#9a9a9a"/><circle cx="9.8" cy="2.6" r="1.5" fill="#9a9a9a"/><circle cx="7" cy="4.6" r="2.9" fill="#c0c0c0"/><ellipse cx="7" cy="9.8" rx="4" ry="3.8" fill="#b0b0b0"/><ellipse cx="7" cy="10" rx="2.1" ry="2.1" fill="#7c7c7c"/><ellipse cx="3" cy="13" rx="1.7" ry="1.1" fill="#d0d0d0"/><ellipse cx="11" cy="13" rx="1.7" ry="1.1" fill="#d0d0d0"/><text x="10.6" y="9.4" font-family="Liberation Sans, sans-serif" font-weight="bold" font-size="5" fill="#fff">T</text><ellipse cx="2.6" cy="8" rx="1.2" ry="2" fill="#c8c8c8" transform="rotate(25 2.6 8)"/><ellipse cx="11.4" cy="8" rx="1.2" ry="2" fill="#c8c8c8" transform="rotate(-25 11.4 8)"/></g><g transform="translate(1298.8 250.3)"><path d="M0.5 2.5L1.8 11Q5.2 13 8.8 11L10 2.5Z" fill="url(#bkt)"/><ellipse cx="5.3" cy="2.5" rx="4.9" ry="2" fill="#9cc0f8" stroke="#4a7ad8" stroke-width="0.8"/><ellipse cx="5.3" cy="2.7" rx="2.6" ry="0.9" fill="#e8f2ff"/></g><g transform="translate(1322.5 248)"><rect x="0" y="0" width="17.5" height="16.5" fill="#fbf4de"/><path d="M0 16.5V0H17.5" stroke="#b8b8b8" stroke-width="0.8" fill="none"/><circle cx="6" cy="7.3" r="4.8" fill="url(#blb)"/><path d="M3.8 11H8.2L7.6 13.5H4.4Z" fill="#e0a010"/><rect x="4.2" y="13.2" width="3.4" height="3" fill="#2a1a08"/><circle cx="12.6" cy="5.3" r="4.8" fill="url(#blb)"/><path d="M10.4 9H14.8L14.2 11.5H11Z" fill="#e0a010"/><rect x="10.8" y="11.2" width="3.4" height="3.4" fill="#2a1a08"/></g><g transform="translate(1112 273)"><path d="M1.5 13Q2.5 4.5 9.5 3.5Q15.5 4 16.5 13.5Z" fill="#8088d0"/><path d="M3 11Q5 6 10 5.5Q14 6 15 10" stroke="#a8b0ec" stroke-width="1.2" fill="none"/><path d="M1 12Q2 3 9 1.5Q15 0.5 18.5 6Q20 9 19.5 13L15.5 13.6Q16 7.5 10.5 6.2Q5.5 6 2.8 11.5Z" fill="#d6bc78"/><path d="M3 3.8Q8 -0.8 15 2.2" stroke="#f6eec4" stroke-width="1.4" fill="none"/><path d="M19.5 13Q19.8 9 18.5 6L16.4 8Q17 10.5 16.6 13.4Z" fill="#9c8444"/><path d="M0.5 16.8H7.5M4 13.2V20.4" stroke="#000" stroke-width="1.2"/></g><rect x="1323" y="274.2" width="17" height="17" fill="#e2e2e2"/><path d="M1323.5 291.2V274.7H1340" stroke="#fafafa" stroke-width="1" fill="none"/><path d="M1339.5 274.7V290.7H1323" stroke="#c4c4c4" stroke-width="1" fill="none"/><g transform="translate(1323 274.2)"><circle cx="8.5" cy="7" r="4.9" fill="url(#blb)"/><path d="M6.2 10.8H10.8L10.2 13.2H6.8Z" fill="#e0a010"/><rect x="6.7" y="13" width="3.6" height="2.8" fill="#2a1a08"/></g></svg>
<!-- colour palette + status bar -->
<div class="a" style="left:277px;top:706px;width:812px;height:1px;background:#a0a0a0;"></div>
<div class="a" style="left:277px;top:707px;width:812px;height:1px;background:#fcfcfc;"></div>
<div class="a" style="left:277px;top:707px;width:1px;height:36px;background:#a0a0a0;"></div>
<div class="a" style="left:298px;top:723px;width:25px;height:20px;background:#000;"></div>
<div class="a" style="left:283px;top:711px;width:25px;height:20px;background:#fff;border:1px solid #333;box-sizing:border-box;box-shadow:1px 1px 0 #888;"></div>
<svg style="left:311px;top:711px;" width="13" height="11" viewBox="0 0 13 11"><rect x="1" y="1" width="6.5" height="5" rx="1.5" fill="none" stroke="#222" stroke-width="1.2"/><rect x="4.5" y="4" width="6.5" height="5" rx="1.5" fill="none" stroke="#222" stroke-width="1.2"/></svg>
<div class="a" style="left:333px;top:712px;width:30px;height:30px;background:#ffffff;box-sizing:border-box;border:1px solid #222;box-shadow:1px 1px 0 #8a8a8a;"></div>
<div class="a" style="left:368px;top:712px;width:30px;height:30px;background:#000000;box-sizing:border-box;border:1px solid #222;box-shadow:1px 1px 0 #8a8a8a;"></div>
<div class="a" style="left:403px;top:712px;width:30px;height:30px;background:#00ffff;box-sizing:border-box;border:1px solid #222;box-shadow:1px 1px 0 #8a8a8a;"></div>
<div class="a" style="left:438px;top:712px;width:30px;height:30px;background:#3344dd;box-sizing:border-box;border:1px solid #222;box-shadow:1px 1px 0 #8a8a8a;"></div>
<div class="a" style="left:473px;top:712px;width:30px;height:30px;background:#5cb850;box-sizing:border-box;border:1px solid #222;box-shadow:1px 1px 0 #8a8a8a;"></div>
<div class="a" style="left:508px;top:712px;width:30px;height:30px;background:#d81428;box-sizing:border-box;border:1px solid #222;box-shadow:1px 1px 0 #8a8a8a;"></div>
<div class="a" style="left:543px;top:712px;width:30px;height:30px;background:#a02ce0;box-sizing:border-box;border:1px solid #222;box-shadow:1px 1px 0 #8a8a8a;"></div>
<div class="a" style="left:578px;top:712px;width:30px;height:30px;background:#ffff80;box-sizing:border-box;border:1px solid #222;box-shadow:1px 1px 0 #8a8a8a;"></div>
<div class="a" style="left:613px;top:712px;width:30px;height:30px;background:#b0a038;box-sizing:border-box;border:1px solid #222;box-shadow:1px 1px 0 #8a8a8a;"></div>
<div class="a" style="left:648px;top:712px;width:30px;height:30px;background:#ffc818;box-sizing:border-box;border:1px solid #222;box-shadow:1px 1px 0 #8a8a8a;"></div>
<div class="a" style="left:683px;top:712px;width:30px;height:30px;background:#050505;box-sizing:border-box;border:1px solid #222;box-shadow:1px 1px 0 #8a8a8a;"></div>
<div class="a" style="left:718px;top:712px;width:30px;height:30px;background:#050505;box-sizing:border-box;border:1px solid #222;box-shadow:1px 1px 0 #8a8a8a;"></div>
<div class="a" style="left:753px;top:712px;width:30px;height:30px;background:#050505;box-sizing:border-box;border:1px solid #222;box-shadow:1px 1px 0 #8a8a8a;"></div>
<div class="a" style="left:788px;top:712px;width:30px;height:30px;background:#050505;box-sizing:border-box;border:1px solid #222;box-shadow:1px 1px 0 #8a8a8a;"></div>
<div class="a" style="left:823px;top:712px;width:30px;height:30px;background:#050505;box-sizing:border-box;border:1px solid #222;box-shadow:1px 1px 0 #8a8a8a;"></div>
<div class="a" style="left:858px;top:712px;width:30px;height:30px;background:#050505;box-sizing:border-box;border:1px solid #222;box-shadow:1px 1px 0 #8a8a8a;"></div>
<div class="a" style="left:893px;top:712px;width:30px;height:30px;background:#050505;box-sizing:border-box;border:1px solid #222;box-shadow:1px 1px 0 #8a8a8a;"></div>
<div class="a" style="left:928px;top:712px;width:30px;height:30px;background:#050505;box-sizing:border-box;border:1px solid #222;box-shadow:1px 1px 0 #8a8a8a;"></div>
<div class="a" style="left:963px;top:712px;width:30px;height:30px;background:#050505;box-sizing:border-box;border:1px solid #222;box-shadow:1px 1px 0 #8a8a8a;"></div>
<div class="a" style="left:998px;top:712px;width:30px;height:30px;background:#050505;box-sizing:border-box;border:1px solid #222;box-shadow:1px 1px 0 #8a8a8a;"></div>
<div class="a" style="left:1033px;top:712px;width:30px;height:30px;background:#050505;box-sizing:border-box;border:1px solid #222;box-shadow:1px 1px 0 #8a8a8a;"></div>
<svg style="left:1073px;top:711px;" width="14" height="10" viewBox="0 0 14 10"><path d="M3.2 7L6.6 3.2L10 7" stroke="#585858" stroke-width="2.3" fill="none"/></svg>
<svg style="left:1073px;top:734px;" width="14" height="10" viewBox="0 0 14 10"><path d="M3.2 2.8L6.6 6.6L10 2.8" stroke="#585858" stroke-width="2.3" fill="none"/></svg>
<div class="a" style="left:1023px;top:751px;width:67px;height:18px;background:#f0f0f0;box-sizing:border-box;border:1px solid;border-color:#9a9a9a #fff #fff #9a9a9a;"></div>
<div class="a" style="left:1092px;top:751px;width:66px;height:18px;background:#f0f0f0;box-sizing:border-box;border:1px solid;border-color:#9a9a9a #fff #fff #9a9a9a;"></div>
<div class="a" style="left:1161px;top:751px;width:61px;height:18px;background:#f0f0f0;box-sizing:border-box;border:1px solid;border-color:#9a9a9a #fff #fff #9a9a9a;"></div>
<div class="a" style="left:1224px;top:751px;width:71px;height:18px;background:#f0f0f0;box-sizing:border-box;border:1px solid;border-color:#9a9a9a #fff #fff #9a9a9a;"></div>
<div class="a" style="left:1297px;top:751px;width:75px;height:18px;background:#f0f0f0;box-sizing:border-box;border:1px solid;border-color:#9a9a9a #fff #fff #9a9a9a;"></div>
<div class="t" style="left:1026px;top:754.14px;font-size:12px;letter-spacing:-0.611px;">X: 1376.837</div>
<div class="t" style="left:1095px;top:754.14px;font-size:12px;letter-spacing:-0.444px;">Y: -438.526</div>
</body></html>
